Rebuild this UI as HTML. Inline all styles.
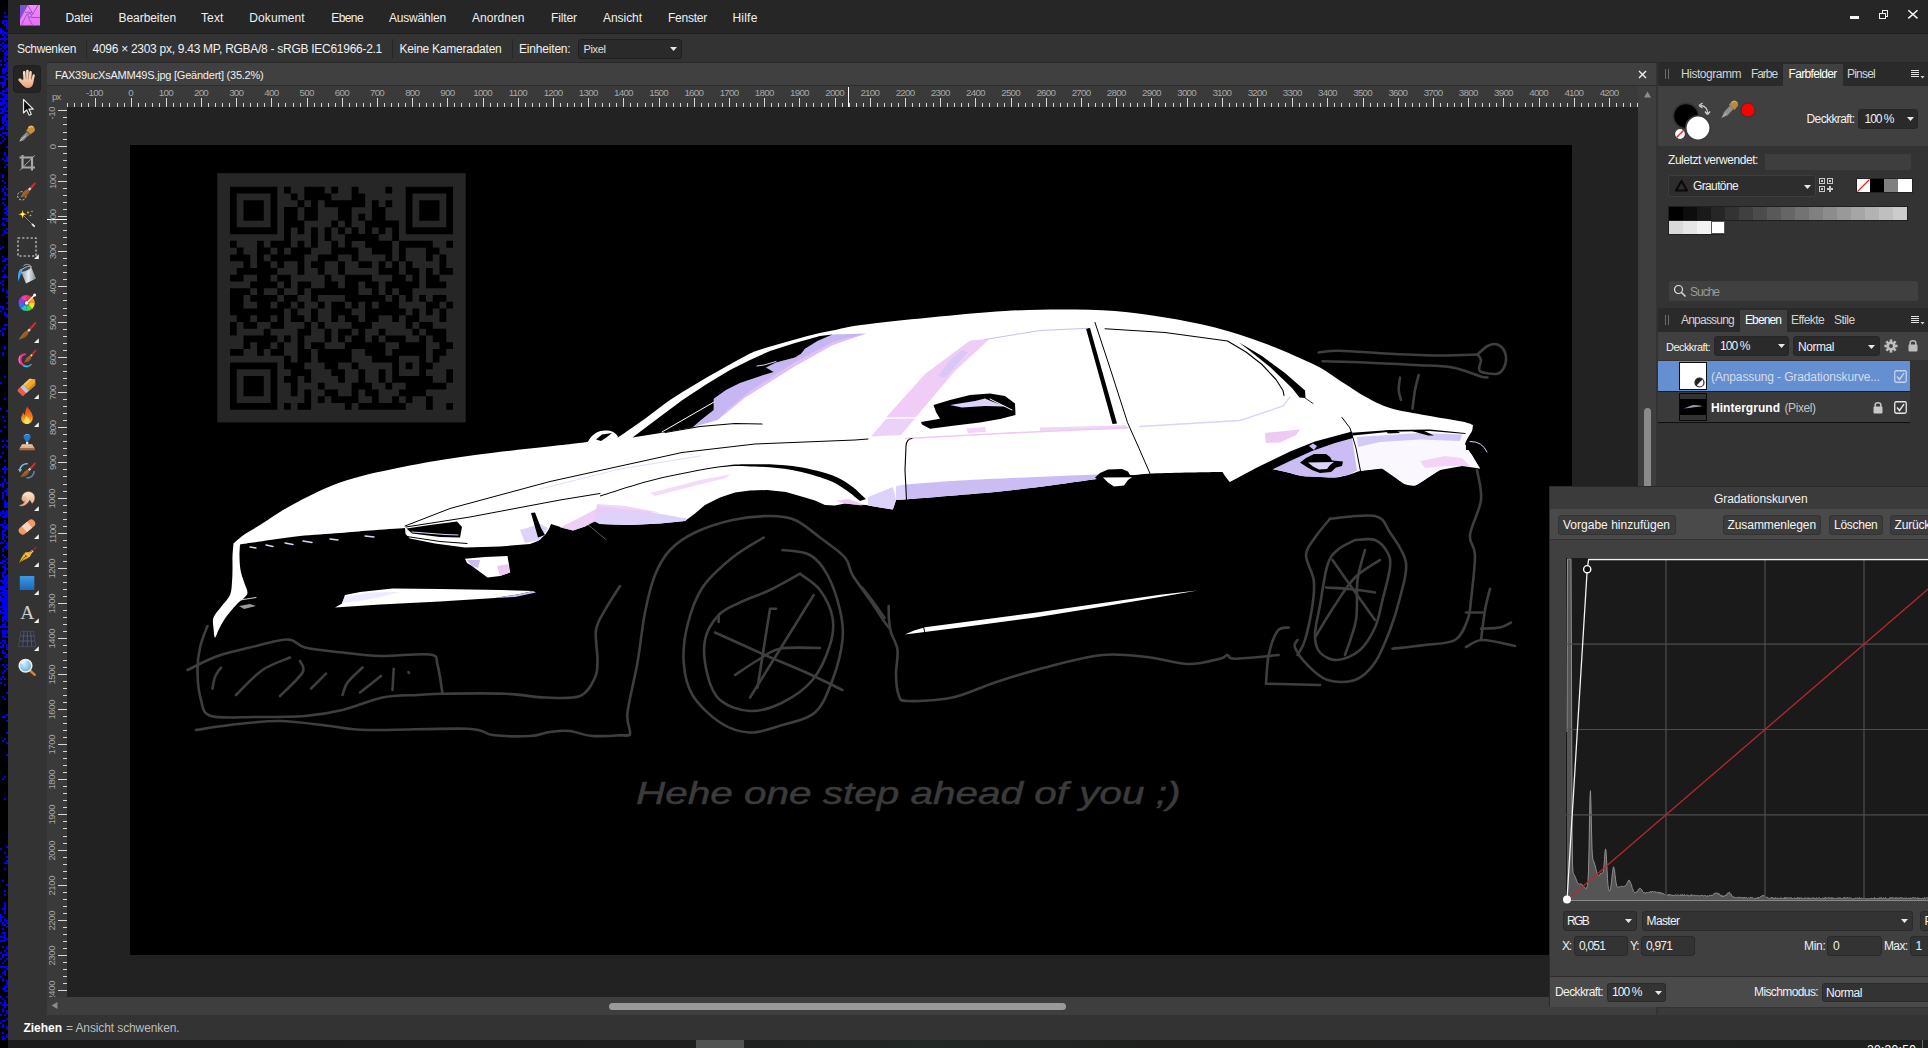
<!DOCTYPE html>
<html lang="de"><head><meta charset="utf-8"><title>Affinity Photo</title>
<style>
html,body{margin:0;padding:0;background:#222;}
body{width:1928px;height:1048px;overflow:hidden;position:relative;font-family:"Liberation Sans",sans-serif;font-size:12px;color:#e4e4e4;}
.t{position:absolute;white-space:nowrap;line-height:1;}
.r{position:absolute;box-sizing:border-box;}
svg{position:absolute;overflow:visible;}
.fld{position:absolute;box-sizing:border-box;background:#2b2b2b;border:1px solid #222;border-radius:3px;}
.btn{position:absolute;box-sizing:border-box;background:#3b3b3b;border:1px solid #2e2e2e;border-radius:3px;}
</style></head>
<body>
<!-- p_strip -->
<svg style="left:0;top:0" width="8" height="1048" viewBox="0 0 8 1048" shape-rendering="crispEdges"><rect width="8" height="1048" fill="#000"/><path fill="#0000ff" d="M4 12h2v2h-2zM4 16h2v2h-2zM6 16h2v2h-2zM2 20h2v2h-2zM4 20h2v2h-2zM6 20h2v2h-2zM2 22h2v2h-2zM6 22h2v2h-2zM4 24h2v2h-2zM6 24h2v2h-2zM6 26h2v2h-2zM0 28h2v2h-2zM6 28h2v2h-2zM0 30h2v2h-2zM2 30h2v2h-2zM0 32h2v2h-2zM2 32h2v2h-2zM4 32h2v2h-2zM6 32h2v2h-2zM2 34h2v2h-2zM6 34h2v2h-2zM4 36h2v2h-2zM0 38h2v2h-2zM2 38h2v2h-2zM4 38h2v2h-2zM6 38h2v2h-2zM4 40h2v2h-2zM2 42h2v2h-2zM0 44h2v2h-2zM4 44h2v2h-2zM6 44h2v2h-2zM2 46h2v2h-2zM4 46h2v2h-2zM6 46h2v2h-2zM0 48h2v2h-2zM4 48h2v2h-2zM2 50h2v2h-2zM6 50h2v2h-2zM4 52h2v2h-2zM6 52h2v2h-2zM4 54h2v2h-2zM6 54h2v2h-2zM4 56h2v2h-2zM4 58h2v2h-2zM6 58h2v2h-2zM0 60h2v2h-2zM4 60h2v2h-2zM6 62h2v2h-2zM0 64h2v2h-2zM4 64h2v2h-2zM6 64h2v2h-2zM6 66h2v2h-2zM2 68h2v2h-2zM4 68h2v2h-2zM6 68h2v2h-2zM2 70h2v2h-2zM4 70h2v2h-2zM6 70h2v2h-2zM2 72h2v2h-2zM4 72h2v2h-2zM6 74h2v2h-2zM0 76h2v2h-2zM2 76h2v2h-2zM4 76h2v2h-2zM4 78h2v2h-2zM6 78h2v2h-2zM4 80h2v2h-2zM0 82h2v2h-2zM2 82h2v2h-2zM4 82h2v2h-2zM2 84h2v2h-2zM4 84h2v2h-2zM2 86h2v2h-2zM6 88h2v2h-2zM2 90h2v2h-2zM4 90h2v2h-2zM6 90h2v2h-2zM0 92h2v2h-2zM2 92h2v2h-2zM2 94h2v2h-2zM4 94h2v2h-2zM6 94h2v2h-2zM4 96h2v2h-2zM6 96h2v2h-2zM0 98h2v2h-2zM2 98h2v2h-2zM4 98h2v2h-2zM6 98h2v2h-2zM2 100h2v2h-2zM4 100h2v2h-2zM0 102h2v2h-2zM2 102h2v2h-2zM4 102h2v2h-2zM6 102h2v2h-2zM0 104h2v2h-2zM2 104h2v2h-2zM6 104h2v2h-2zM4 106h2v2h-2zM6 106h2v2h-2zM0 108h2v2h-2zM2 108h2v2h-2zM4 108h2v2h-2zM2 110h2v2h-2zM4 110h2v2h-2zM6 110h2v2h-2zM0 112h2v2h-2zM2 112h2v2h-2zM4 114h2v2h-2zM6 114h2v2h-2zM2 116h2v2h-2zM4 116h2v2h-2zM6 116h2v2h-2zM2 118h2v2h-2zM4 118h2v2h-2zM2 120h2v2h-2zM4 120h2v2h-2zM6 120h2v2h-2zM2 122h2v2h-2zM6 122h2v2h-2zM4 124h2v2h-2zM6 124h2v2h-2zM2 126h2v2h-2zM6 126h2v2h-2zM0 128h2v2h-2zM2 128h2v2h-2zM6 128h2v2h-2zM2 132h2v2h-2zM4 132h2v2h-2zM6 132h2v2h-2zM0 134h2v2h-2zM6 134h2v2h-2zM2 136h2v2h-2zM4 138h2v2h-2zM2 140h2v2h-2zM0 142h2v2h-2zM6 146h2v2h-2zM4 152h2v2h-2zM4 154h2v2h-2zM6 156h2v2h-2zM2 158h2v2h-2zM6 158h2v2h-2zM4 160h2v2h-2zM6 160h2v2h-2zM6 164h2v2h-2zM4 166h2v2h-2zM2 174h2v2h-2zM2 176h2v2h-2zM2 180h2v2h-2zM4 182h2v2h-2zM4 186h2v2h-2zM2 188h2v2h-2zM6 188h2v2h-2zM2 190h2v2h-2zM4 192h2v2h-2zM4 194h2v2h-2zM6 194h2v2h-2zM2 198h2v2h-2zM4 198h2v2h-2zM2 202h2v2h-2zM4 204h2v2h-2zM6 206h2v2h-2zM4 208h2v2h-2zM6 208h2v2h-2zM6 210h2v2h-2zM4 212h2v2h-2zM6 212h2v2h-2zM6 214h2v2h-2zM2 218h2v2h-2zM4 218h2v2h-2zM6 218h2v2h-2zM6 220h2v2h-2zM2 222h2v2h-2zM2 224h2v2h-2zM4 224h2v2h-2zM6 228h2v2h-2zM4 230h2v2h-2zM4 232h2v2h-2zM6 232h2v2h-2zM2 234h2v2h-2zM2 246h2v2h-2zM0 248h2v2h-2zM2 256h2v2h-2zM4 258h2v2h-2zM6 258h2v2h-2zM2 260h2v2h-2zM4 260h2v2h-2zM6 264h2v2h-2zM4 266h2v2h-2zM4 268h2v2h-2zM2 270h2v2h-2zM4 274h2v2h-2zM2 276h2v2h-2zM4 276h2v2h-2zM6 276h2v2h-2zM2 280h2v2h-2zM0 282h2v2h-2zM2 284h2v2h-2zM2 288h2v2h-2zM2 290h2v2h-2zM6 290h2v2h-2zM6 292h2v2h-2zM6 296h2v2h-2zM6 302h2v2h-2zM0 306h2v2h-2zM2 306h2v2h-2zM2 308h2v2h-2zM6 308h2v2h-2zM0 310h2v2h-2zM4 312h2v2h-2zM4 314h2v2h-2zM6 314h2v2h-2zM6 316h2v2h-2zM4 324h2v2h-2zM6 324h2v2h-2zM2 328h2v2h-2zM4 328h2v2h-2zM0 330h2v2h-2zM2 332h2v2h-2zM2 334h2v2h-2zM4 346h2v2h-2zM4 348h2v2h-2zM2 352h2v2h-2zM2 354h2v2h-2zM4 376h2v2h-2zM0 382h2v2h-2zM4 398h2v2h-2zM0 408h2v2h-2zM6 410h2v2h-2zM2 416h2v2h-2zM4 420h2v2h-2zM4 426h2v2h-2zM0 430h2v2h-2zM2 440h2v2h-2zM6 440h2v2h-2zM4 444h2v2h-2zM2 446h2v2h-2zM6 446h2v2h-2zM2 452h2v2h-2zM0 456h2v2h-2zM4 460h2v2h-2zM4 466h2v2h-2zM2 468h2v2h-2zM4 468h2v2h-2zM6 468h2v2h-2zM4 470h2v2h-2zM4 472h2v2h-2zM2 476h2v2h-2zM4 478h2v2h-2zM4 480h2v2h-2zM2 482h2v2h-2zM6 482h2v2h-2zM0 484h2v2h-2zM2 484h2v2h-2zM2 486h2v2h-2zM6 488h2v2h-2zM4 490h2v2h-2zM6 490h2v2h-2zM2 492h2v2h-2zM6 492h2v2h-2zM2 494h2v2h-2zM6 494h2v2h-2zM2 496h2v2h-2zM2 498h2v2h-2zM4 500h2v2h-2zM4 502h2v2h-2zM6 502h2v2h-2zM4 504h2v2h-2zM6 504h2v2h-2zM4 506h2v2h-2zM6 506h2v2h-2zM2 510h2v2h-2zM6 510h2v2h-2zM0 512h2v2h-2zM2 512h2v2h-2zM4 512h2v2h-2zM6 512h2v2h-2zM0 514h2v2h-2zM4 514h2v2h-2zM6 514h2v2h-2zM2 516h2v2h-2zM4 516h2v2h-2zM6 516h2v2h-2zM4 520h2v2h-2zM4 522h2v2h-2zM0 524h2v2h-2zM2 524h2v2h-2zM6 524h2v2h-2zM2 526h2v2h-2zM4 526h2v2h-2zM6 526h2v2h-2zM4 528h2v2h-2zM6 528h2v2h-2zM2 530h2v2h-2zM4 530h2v2h-2zM2 532h2v2h-2zM2 534h2v2h-2zM4 534h2v2h-2zM2 536h2v2h-2zM6 536h2v2h-2zM2 538h2v2h-2zM4 540h2v2h-2zM0 542h2v2h-2zM2 542h2v2h-2zM6 542h2v2h-2zM6 544h2v2h-2zM4 546h2v2h-2zM6 546h2v2h-2zM2 548h2v2h-2zM6 548h2v2h-2zM2 550h2v2h-2zM2 554h2v2h-2zM4 556h2v2h-2zM6 558h2v2h-2zM2 560h2v2h-2zM4 560h2v2h-2zM0 562h2v2h-2zM2 562h2v2h-2zM6 562h2v2h-2zM4 564h2v2h-2zM2 566h2v2h-2zM4 566h2v2h-2zM4 568h2v2h-2zM6 568h2v2h-2zM4 570h2v2h-2zM2 572h2v2h-2zM4 572h2v2h-2zM2 574h2v2h-2zM6 574h2v2h-2zM2 576h2v2h-2zM4 576h2v2h-2zM6 576h2v2h-2zM4 578h2v2h-2zM6 578h2v2h-2zM0 580h2v2h-2zM2 580h2v2h-2zM4 580h2v2h-2zM6 580h2v2h-2zM2 582h2v2h-2zM4 582h2v2h-2zM6 582h2v2h-2zM4 584h2v2h-2zM6 584h2v2h-2zM0 586h2v2h-2zM2 586h2v2h-2zM4 586h2v2h-2zM6 586h2v2h-2zM0 588h2v2h-2zM2 588h2v2h-2zM4 588h2v2h-2zM2 590h2v2h-2zM4 590h2v2h-2zM6 590h2v2h-2zM0 592h2v2h-2zM2 592h2v2h-2zM4 592h2v2h-2zM6 592h2v2h-2zM2 594h2v2h-2zM4 594h2v2h-2zM6 594h2v2h-2zM0 596h2v2h-2zM4 596h2v2h-2zM6 596h2v2h-2zM0 598h2v2h-2zM2 598h2v2h-2zM4 598h2v2h-2zM6 598h2v2h-2zM0 600h2v2h-2zM2 600h2v2h-2zM4 600h2v2h-2zM6 600h2v2h-2zM2 602h2v2h-2zM4 602h2v2h-2zM6 602h2v2h-2zM2 604h2v2h-2zM4 604h2v2h-2zM6 604h2v2h-2zM0 606h2v2h-2zM2 606h2v2h-2zM4 606h2v2h-2zM6 606h2v2h-2zM2 608h2v2h-2zM4 608h2v2h-2zM6 608h2v2h-2zM0 610h2v2h-2zM4 610h2v2h-2zM6 610h2v2h-2zM0 612h2v2h-2zM2 612h2v2h-2zM4 612h2v2h-2zM6 612h2v2h-2zM4 614h2v2h-2zM6 614h2v2h-2zM2 616h2v2h-2zM4 616h2v2h-2zM6 616h2v2h-2zM2 618h2v2h-2zM4 618h2v2h-2zM6 618h2v2h-2zM2 620h2v2h-2zM6 620h2v2h-2zM4 622h2v2h-2zM2 624h2v2h-2zM4 624h2v2h-2zM0 626h2v2h-2zM2 626h2v2h-2zM4 626h2v2h-2zM6 626h2v2h-2zM2 630h2v2h-2zM4 630h2v2h-2zM6 630h2v2h-2zM2 632h2v2h-2zM4 632h2v2h-2zM6 632h2v2h-2zM2 634h2v2h-2zM4 634h2v2h-2zM2 636h2v2h-2zM4 636h2v2h-2zM6 636h2v2h-2zM2 640h2v2h-2zM4 640h2v2h-2zM0 642h2v2h-2zM4 642h2v2h-2zM2 644h2v2h-2zM6 644h2v2h-2zM0 646h2v2h-2zM2 646h2v2h-2zM6 646h2v2h-2zM6 648h2v2h-2zM2 650h2v2h-2zM2 652h2v2h-2zM4 652h2v2h-2zM6 654h2v2h-2zM4 656h2v2h-2zM6 656h2v2h-2zM0 658h2v2h-2zM2 664h2v2h-2zM6 664h2v2h-2zM4 666h2v2h-2zM6 668h2v2h-2zM4 670h2v2h-2zM2 672h2v2h-2zM2 676h2v2h-2zM0 678h2v2h-2zM4 678h2v2h-2zM0 682h2v2h-2zM4 684h2v2h-2zM6 692h2v2h-2zM2 696h2v2h-2zM4 698h2v2h-2zM6 714h2v2h-2zM2 716h2v2h-2zM4 716h2v2h-2zM6 720h2v2h-2zM6 732h2v2h-2zM4 738h2v2h-2zM2 740h2v2h-2zM6 742h2v2h-2zM6 754h2v2h-2zM4 776h2v2h-2zM2 778h2v2h-2zM4 798h2v2h-2zM6 846h2v2h-2zM0 848h2v2h-2zM4 852h2v2h-2zM6 856h2v2h-2zM6 860h2v2h-2zM4 862h2v2h-2zM6 862h2v2h-2zM4 868h2v2h-2zM2 880h2v2h-2zM6 884h2v2h-2zM4 890h2v2h-2zM4 894h2v2h-2zM4 902h2v2h-2zM4 904h2v2h-2zM4 906h2v2h-2zM2 908h2v2h-2zM4 908h2v2h-2zM4 910h2v2h-2zM4 912h2v2h-2zM0 914h2v2h-2zM0 916h2v2h-2zM2 916h2v2h-2zM0 918h2v2h-2zM4 918h2v2h-2zM0 920h2v2h-2zM4 920h2v2h-2zM6 920h2v2h-2zM2 922h2v2h-2zM6 922h2v2h-2zM2 924h2v2h-2zM4 924h2v2h-2zM6 926h2v2h-2zM2 928h2v2h-2zM2 932h2v2h-2zM4 932h2v2h-2zM4 934h2v2h-2zM0 936h2v2h-2zM2 936h2v2h-2zM4 936h2v2h-2zM4 938h2v2h-2zM6 938h2v2h-2zM0 940h2v2h-2zM2 940h2v2h-2zM4 940h2v2h-2zM2 946h2v2h-2zM6 946h2v2h-2zM6 948h2v2h-2zM4 950h2v2h-2zM0 952h2v2h-2zM6 952h2v2h-2zM2 954h2v2h-2zM4 954h2v2h-2zM6 954h2v2h-2zM2 956h2v2h-2zM0 958h2v2h-2zM6 958h2v2h-2zM4 960h2v2h-2zM2 962h2v2h-2zM0 966h2v2h-2zM2 966h2v2h-2zM4 966h2v2h-2zM6 966h2v2h-2zM6 968h2v2h-2zM4 970h2v2h-2zM2 972h2v2h-2zM4 972h2v2h-2zM4 974h2v2h-2zM0 976h2v2h-2zM2 978h2v2h-2zM2 980h2v2h-2zM6 980h2v2h-2zM6 982h2v2h-2zM6 984h2v2h-2zM4 986h2v2h-2zM6 986h2v2h-2zM2 988h2v2h-2zM4 988h2v2h-2zM4 990h2v2h-2zM6 990h2v2h-2zM0 996h2v2h-2zM6 996h2v2h-2zM2 998h2v2h-2zM4 1000h2v2h-2zM0 1002h2v2h-2zM4 1002h2v2h-2zM2 1004h2v2h-2zM4 1004h2v2h-2zM6 1004h2v2h-2zM4 1006h2v2h-2zM2 1008h2v2h-2zM2 1010h2v2h-2zM6 1010h2v2h-2zM6 1012h2v2h-2zM0 1014h2v2h-2zM4 1014h2v2h-2zM6 1018h2v2h-2zM2 1020h2v2h-2zM4 1020h2v2h-2zM0 1022h2v2h-2zM2 1024h2v2h-2zM2 1026h2v2h-2zM6 1026h2v2h-2zM6 1028h2v2h-2zM2 1032h2v2h-2zM6 1034h2v2h-2zM2 1036h2v2h-2zM6 1036h2v2h-2zM2 1038h2v2h-2zM4 1038h2v2h-2zM2 1042h2v2h-2z"/></svg>
<!-- p_top -->
<div class="r" style="left:8px;top:0px;width:1920px;height:34px;background:#262626;"></div>
<div class="r" style="left:8px;top:33px;width:1920px;height:1px;background:#1e1e1e;"></div>
<svg style="left:20px;top:4.700px" width="20" height="20.500" viewBox="0 0 20 20.500">
<defs><linearGradient id="lg" x1="0" y1="0" x2="0.300" y2="1"><stop offset="0" stop-color="#f894fb"/><stop offset="1" stop-color="#e672f4"/></linearGradient></defs>
<rect width="20" height="20.500" fill="url(#lg)"/>
<path d="M0 0H8.100L0 14.700z" fill="#7e50d8"/>
<g stroke="#9a50ca" stroke-width="0.950" fill="none">
<path d="M8.100 0.600L12.800 9.100"/><path d="M5 7.300H11.900"/><path d="M18.100 0L12.600 9.600"/><path d="M10.600 12.500H20"/><path d="M8.100 12.200L12.800 20.500"/><path d="M1.250 20.500L7.200 8.600"/>
<circle cx="9.700" cy="10.300" r="1.800"/></g></svg>
<span class="t " style="left:65.50px;top:11.84px;font-size:12px;color:#f0f0f0;letter-spacing:-0.202px;">Datei</span>
<span class="t " style="left:118.50px;top:11.84px;font-size:12px;color:#f0f0f0;letter-spacing:-0.054px;">Bearbeiten</span>
<span class="t " style="left:201.00px;top:11.84px;font-size:12px;color:#f0f0f0;letter-spacing:0.123px;">Text</span>
<span class="t " style="left:249.30px;top:11.84px;font-size:12px;color:#f0f0f0;letter-spacing:0.089px;">Dokument</span>
<span class="t " style="left:331.30px;top:11.84px;font-size:12px;color:#f0f0f0;letter-spacing:-0.599px;">Ebene</span>
<span class="t " style="left:389.00px;top:11.84px;font-size:12px;color:#f0f0f0;letter-spacing:-0.189px;">Auswählen</span>
<span class="t " style="left:472.00px;top:11.84px;font-size:12px;color:#f0f0f0;letter-spacing:0.058px;">Anordnen</span>
<span class="t " style="left:551.00px;top:11.84px;font-size:12px;color:#f0f0f0;letter-spacing:-0.111px;">Filter</span>
<span class="t " style="left:603.00px;top:11.84px;font-size:12px;color:#f0f0f0;letter-spacing:-0.050px;">Ansicht</span>
<span class="t " style="left:668.00px;top:11.84px;font-size:12px;color:#f0f0f0;letter-spacing:-0.240px;">Fenster</span>
<span class="t " style="left:732.50px;top:11.84px;font-size:12px;color:#f0f0f0;letter-spacing:0.199px;">Hilfe</span>
<svg style="left:1846px;top:8px" width="76" height="16" viewBox="0 0 76 16" shape-rendering="crispEdges">
<rect x="4" y="7.700" width="9.300" height="3.300" fill="#f4f4f4"/>
<g fill="none" stroke="#f0f0f0" stroke-width="1.300"><path d="M36.300 4.800V2.600H41.700V8.200H39.600"/><rect x="33.500" y="5.400" width="5.700" height="5.200"/></g>
<path d="M33 5.200H39.800M35.800 2.400H42.200" stroke="#f0f0f0" stroke-width="1.400"/>
</svg>
<svg style="left:1907px;top:9px" width="12" height="11" viewBox="0 0 12 11"><path d="M1.300 1.200L10.500 9.400M10.500 1.200L1.300 9.400" stroke="#f4f4f4" stroke-width="1.500" fill="none"/></svg>
<div class="r" style="left:8px;top:34px;width:1920px;height:29px;background:#333333;"></div>
<div class="r" style="left:47px;top:62px;width:1881px;height:1.3px;background:#282828;"></div>
<span class="t " style="left:17.00px;top:42.84px;font-size:12px;color:#f0f0f0;letter-spacing:-0.337px;">Schwenken</span>
<div class="r" style="left:86px;top:39px;width:1px;height:20px;background:#262626;"></div>
<span class="t " style="left:92.50px;top:42.84px;font-size:12px;color:#f0f0f0;letter-spacing:-0.277px;">4096 × 2303 px, 9.43 MP, RGBA/8 - sRGB IEC61966-2.1</span>
<div class="r" style="left:392px;top:39px;width:1px;height:20px;background:#262626;"></div>
<span class="t " style="left:399.50px;top:42.84px;font-size:12px;color:#f0f0f0;letter-spacing:-0.239px;">Keine Kameradaten</span>
<div class="r" style="left:512px;top:39px;width:1px;height:20px;background:#262626;"></div>
<span class="t " style="left:519.00px;top:42.84px;font-size:12px;color:#f0f0f0;letter-spacing:-0.187px;">Einheiten:</span>
<div class="fld" style="left:578px;top:39px;width:104px;height:20px;background:#2a2a2a;border-color:#1f1f1f"></div>
<span class="t " style="left:583.50px;top:43.69px;font-size:11px;color:#e0e0e0;letter-spacing:-0.369px;">Pixel</span>
<svg style="left:670px;top:47px" width="7" height="4" viewBox="0 0 7 4"><path d="M0 0H7L3.5 4z" fill="#e8e8e8"/></svg>
<!-- p_tools -->
<div class="r" style="left:8px;top:63px;width:39px;height:952px;background:#333333;"></div>
<div class="r" style="left:13px;top:65px;width:28px;height:28px;background:#242424;border-radius:4px;border:1px solid #1f1f1f"></div>
<svg style="left:0;top:0" width="60" height="700" viewBox="0 0 60 700"><defs>
<linearGradient id="gskin" x1="0" y1="0" x2="0" y2="1"><stop offset="0" stop-color="#fde6d2"/><stop offset="1" stop-color="#e8a884"/></linearGradient>
<linearGradient id="gflame" x1="0" y1="0" x2="0" y2="1"><stop offset="0" stop-color="#e03c14"/><stop offset="0.55" stop-color="#f47a18"/><stop offset="1" stop-color="#ffd030"/></linearGradient>
<linearGradient id="gblue" x1="0" y1="0" x2="0" y2="1"><stop offset="0" stop-color="#3f98e6"/><stop offset="1" stop-color="#1c68b8"/></linearGradient>
<linearGradient id="gbr" x1="0" y1="0" x2="1" y2="1"><stop offset="0" stop-color="#c98a4a"/><stop offset="1" stop-color="#6e3a12"/></linearGradient>
<linearGradient id="gsilver" x1="0" y1="0" x2="1" y2="0"><stop offset="0" stop-color="#8a969c"/><stop offset="0.5" stop-color="#e4ecf0"/><stop offset="1" stop-color="#7c888e"/></linearGradient>
<radialGradient id="glens" cx="0.4" cy="0.35" r="0.7"><stop offset="0" stop-color="#d4ecfc"/><stop offset="1" stop-color="#5aa8e4"/></radialGradient>
</defs>
<g transform="translate(13 64)"><defs><linearGradient id="ghand" gradientUnits="userSpaceOnUse" x1="0" y1="6" x2="0" y2="24"><stop offset="0" stop-color="#fde2cc"/><stop offset="0.550" stop-color="#f6c8a8"/><stop offset="1" stop-color="#e6a07c"/></linearGradient></defs>
<g stroke="url(#ghand)" stroke-linecap="round" fill="none"><path d="M11.700 16L11.200 8.200" stroke-width="2.500"/><path d="M14.400 16V7.100" stroke-width="2.500"/><path d="M17 16L17.500 8.200" stroke-width="2.500"/><path d="M19.200 17.500L20.700 11.400" stroke-width="2.300"/><path d="M11 20.500L6.800 15.800" stroke-width="2.900"/></g>
<path d="M9.300 15.500H20.300C20.800 19 19.800 24 14.800 24C10.500 24 8.600 19.500 9.300 15.500Z" fill="url(#ghand)"/></g>
<g transform="translate(13 92)"><path d="M10.500 7.500V21L13.700 17.900L16.200 23.200L18.300 22.200L15.900 17.100H20.300Z" fill="#0c0c0c" stroke="#e8e8e8" stroke-width="1.200" stroke-linejoin="round"/></g>
<g transform="translate(13 120)"><path d="M6.300 21.800L7.800 17.800L14.300 11.200L17 13.900L10.400 20.400Z" fill="#8c8c8c"/><path d="M7 21L12.500 15.500" stroke="#c4c4c4" stroke-width="1"/>
<path d="M13.200 10.200L14.800 8.600C15 6.500 17.500 4.800 19.800 6C22.200 7.300 22.600 10.200 21 11.800C20 12.800 19.200 12.800 18.800 13.200L17.600 14.600Z" fill="#c6923a"/><path d="M15.500 8C16.500 6.500 18.800 6 20.200 7.200" stroke="#ecc880" stroke-width="1.100" fill="none"/><path d="M13.200 10.200L17.600 14.600L16.800 15.400L12.400 11Z" fill="#7a5a20"/></g>
<g transform="translate(13 148)"><path d="M9.500 7V19.500H22M6.500 9.500H19V22.500" fill="none" stroke="#a8a8a8" stroke-width="2.200"/><path d="M6.800 22.500L21.800 7.300" stroke="#a8a8a8" stroke-width="1"/></g>
<g transform="translate(13 176)"><circle cx="8.800" cy="19.800" r="4.200" fill="none" stroke="#d0d0d0" stroke-width="1" stroke-dasharray="2 1.600"/>
<path d="M21.800 6.200L23 7.800L18.600 12.800L16.800 11.200Z" fill="#e02828"/><path d="M16.800 11.200L18.600 12.800L16.400 15L14.800 13.300Z" fill="#d8d8d8"/>
<path d="M14.800 13.300L16.400 15C16.500 18.500 13.500 21.500 7 21.500C9 19.800 9 15.500 14.800 13.300Z" fill="url(#gbr)"/></g>
<g transform="translate(13 204)"><path d="M11 12L21 22" stroke="#2a2a2a" stroke-width="2.600" stroke-linecap="round"/><path d="M11 12L21 22" stroke="#8a8a8a" stroke-width="1" stroke-linecap="round"/><path d="M19.500 20.500L21.200 22.200" stroke="#e8e8e8" stroke-width="1.800" stroke-linecap="round"/>
<path d="M9.600 6L10.600 9.200L13.800 10.300L10.600 11.300L9.600 14.500L8.600 11.300L5.400 10.300L8.600 9.200Z" fill="#f8c830"/><circle cx="9.600" cy="10.300" r="1.300" fill="#fff6c0"/>
<circle cx="15" cy="8.500" r="0.900" fill="#f8c830"/><circle cx="17.500" cy="11.500" r="0.800" fill="#f8c830"/><circle cx="19" cy="7.500" r="0.700" fill="#f8c830"/></g>
<g transform="translate(13 232)"><rect x="5" y="6" width="18" height="18" fill="none" stroke="#e4e4e4" stroke-width="1.100" stroke-dasharray="2.200 2"/><path d="M25.800 22.300V26.900H21z" fill="#f2f2f2"/></g>
<g transform="translate(13 260)"><path d="M9.500 8C6 9.500 4.500 14 5.200 21.500C6.800 19 7 15 9.500 13Z" fill="#2890e8"/><path d="M8 9C6 11 5.600 15 5.800 18" stroke="#70c0ff" stroke-width="0.800" fill="none"/>
<path d="M8 11.500L18 6.800L23 18.500L13 23.500Z" fill="url(#gsilver)"/><ellipse cx="13" cy="9.150" rx="5.500" ry="1.900" transform="rotate(-25 13 9.150)" fill="#3a4248" stroke="#c8d0d4" stroke-width="0.800"/><path d="M10 6.500C12 3.500 17 3.800 18.500 7" fill="none" stroke="#aab2b6" stroke-width="0.900"/></g>
<g transform="translate(13 288)"><path d="M13.650 15L13.65 6.90A8.100 8.100 0 0 1 19.55 9.45Z" fill="#ff3030"/><path d="M13.650 15L19.38 9.27A8.100 8.100 0 0 1 21.75 15.24Z" fill="#ff9a20"/><path d="M13.650 15L21.75 15.00A8.100 8.100 0 0 1 19.20 20.90Z" fill="#f4e020"/><path d="M13.650 15L19.38 20.73A8.100 8.100 0 0 1 13.41 23.10Z" fill="#50d040"/><path d="M13.650 15L13.65 23.10A8.100 8.100 0 0 1 7.75 20.55Z" fill="#20c8c0"/><path d="M13.650 15L7.92 20.73A8.100 8.100 0 0 1 5.55 14.76Z" fill="#3070f0"/><path d="M13.650 15L5.55 15.00A8.100 8.100 0 0 1 8.10 9.10Z" fill="#9040e0"/><path d="M13.650 15L7.92 9.27A8.100 8.100 0 0 1 13.89 6.90Z" fill="#f040b0"/><circle cx="13.650" cy="15" r="3" fill="#4a4a4a" opacity="0.550"/><path d="M13.650 15L21.600 7" stroke="#ffffff" stroke-width="1.300"/><circle cx="13.650" cy="15" r="1.700" fill="#fff"/><circle cx="21.600" cy="7" r="1.500" fill="#fff"/></g>
<g transform="translate(13 316)"><path d="M22.300 5.800L23.400 7.200L17.800 14L16 12.500Z" fill="#e02828"/><path d="M16 12.500L17.800 14L15.800 16L14.200 14.500Z" fill="#dcdcdc"/>
<path d="M14.200 14.500L15.800 16C15.500 19.500 12 23 5.300 23.500C8 21.500 8.500 17 14.200 14.500Z" fill="url(#gbr)"/><path d="M25.800 22.300V26.900H21z" fill="#f2f2f2"/></g>
<g transform="translate(13 344)"><path d="M13 9.500C7 8.500 3.800 14 6.500 19C9 23 14.500 23 17.500 20.500C14 22 10 21 8.800 17.500C7.600 14 9.800 11 13 11Z" fill="#e83890"/><path d="M10 21.500C12.500 23.500 16.500 23 18.500 20" stroke="#30b8e8" stroke-width="1.300" fill="none"/><path d="M7 12C5.500 14.500 5.800 17.500 7.200 19.500" stroke="#ff80c0" stroke-width="1" fill="none"/>
<path d="M22.600 5.400L23.600 6.600L19.800 11.200L18.400 10Z" fill="#e02828"/><path d="M18.400 10L19.800 11.200L18.300 12.800L17 11.600Z" fill="#dcdcdc"/><path d="M17 11.600L18.300 12.800C18.500 16 15.500 18.800 10.800 18.500C13 17 12.500 13.500 17 11.600Z" fill="url(#gbr)"/></g>
<g transform="translate(13 372)"><g transform="rotate(-42 14 14.500)"><rect x="4" y="10.500" width="5.500" height="8.500" rx="1.600" fill="#f05848"/><rect x="8.800" y="10.500" width="4.200" height="8.500" fill="#d8dcde"/><path d="M9.800 10.500V19M11.200 10.500V19M12.400 10.500V19" stroke="#8a9094" stroke-width="0.500"/><path d="M13 10.500H21L25 14.750L21 19H13Z" fill="#f0a830"/><path d="M13 10.500H21L23 12.600H13Z" fill="#f8c860"/><path d="M13 16.800H23L21 19H13Z" fill="#d08820"/></g><path d="M25.800 22.300V26.900H21z" fill="#f2f2f2"/></g>
<g transform="translate(13 400)"><path d="M14.500 6.500C15.500 9.500 19.500 12 19.800 17C20 21 17.500 24 14 24C10.500 24 8 21.500 8.200 18C8.300 15.500 9.800 14.500 10 12.500C11 13.500 11.300 14.500 11.500 15.500C12.800 13 11.800 9.500 14.500 6.500Z" fill="url(#gflame)"/><path d="M14 24C12 24 10.800 22.500 11 20.800C11.200 19 12.800 18 13.200 16C14.800 17.500 17 19 16.800 21.500C16.700 23 15.500 24 14 24Z" fill="#ffe050"/><path d="M25.800 22.300V26.900H21z" fill="#f2f2f2"/></g>
<g transform="translate(13 428)"><path d="M10.500 8.500C10.500 5.500 17.700 5.500 17.700 8.500C17.700 11 15.200 12 15 14.500H13.200C13 12 10.500 11 10.500 8.500Z" fill="#2a78c8"/><path d="M11.500 7.500C12.500 6.200 15 6 16.500 7" stroke="#7ab8f0" stroke-width="0.900" fill="none"/><rect x="13" y="14" width="2.300" height="2.500" fill="#e8e8e8"/>
<path d="M9 16.500H19.200L21.800 20.500H6.400Z" fill="#e0b088"/><rect x="6.400" y="20.500" width="15.400" height="1.800" fill="#b06838"/><path d="M9 16.500H19.200L19.800 17.500H8.400Z" fill="#f4d4b8"/></g>
<g transform="translate(13 456)"><path d="M6.800 14C7.300 9.800 11 7.200 14.800 7.800" stroke="#86b4e0" stroke-width="1.600" fill="none"/><path d="M5 13L7 16.600L9.200 13.200Z" fill="#86b4e0"/><path d="M21.200 15C21 19.500 17.500 22.300 13.500 21.800" stroke="#5888b8" stroke-width="1.600" fill="none"/>
<path d="M21.800 6.300L23 7.700L18.200 13.200L16.600 11.800Z" fill="#e02828"/><path d="M16.600 11.800L18.200 13.200L16.400 15L14.900 13.600Z" fill="#dcdcdc"/><path d="M14.900 13.600L16.400 15C16.200 18 13.500 21 7.200 21C9.500 19.500 9.800 15.800 14.900 13.600Z" fill="url(#gbr)"/></g>
<g transform="translate(13 484)"><path d="M10 10.500C12 7 18.500 6.500 20.800 10.500C22.500 13.500 21.500 17.500 19 19.500C18 17.500 17.500 16.500 16.500 16C15.500 18.500 13 21.500 9 22C7.500 22.200 6.500 21.800 6.500 21.300C9 21 11 19.500 11.800 17.500C10.500 17.500 9.500 17 9 16C8.500 15 8.500 14 9 13C9 12 9.300 11.200 10 10.500Z" fill="url(#gskin)" stroke="#c08860" stroke-width="0.400"/><path d="M9.200 13.200C11 13 12.500 13.500 13.500 14.500M9 16C10.500 15.500 12 15.800 13 16.800" stroke="#c08860" stroke-width="0.600" fill="none"/><path d="M25.800 22.300V26.900H21z" fill="#f2f2f2"/></g>
<g transform="translate(13 512)"><g transform="rotate(-40 14 15)"><rect x="4.500" y="11" width="19" height="8" rx="4" fill="#f09a68"/><rect x="10.500" y="11" width="7" height="8" fill="#f8d4c0"/></g><path d="M25.800 22.300V26.900H21z" fill="#f2f2f2"/></g>
<g transform="translate(13 540)"><path d="M22.800 6.200L24 7.800L20.500 11.500L18.800 10Z" fill="#8a2c1c"/><path d="M18.800 10L20.500 11.500L18.800 13.300L17.200 11.800Z" fill="#e8e8e8"/><path d="M17.900 10.900L19.600 12.400" stroke="#6a2414" stroke-width="0.800"/>
<path d="M17.200 11.800L18.800 13.300L17 16.500C14 19 10 20 6.200 22.800C8 18.500 9.500 15 12.500 12.500Z" fill="#e8b030"/><path d="M6.200 22.800L12.500 16.500" stroke="#7a5410" stroke-width="0.800"/><circle cx="12.800" cy="16.200" r="1" fill="#7a5410"/><path d="M12.500 12.500L17 16.500" stroke="#f8dc80" stroke-width="0.700"/><path d="M25.800 22.300V26.900H21z" fill="#f2f2f2"/></g>
<g transform="translate(13 568)"><rect x="6.800" y="8" width="14.500" height="14" fill="url(#gblue)"/><path d="M25.800 22.300V26.900H21z" fill="#f2f2f2"/></g>
<g transform="translate(13 596)"><path d="M25.800 22.300V26.900H21z" fill="#f2f2f2"/></g>
<g transform="translate(13 624)"><path d="M8 7.400H20.600L22.600 22.600H5.500Z" fill="#2c303c"/><path d="M11 7.400L9.700 22.600M14.300 7.400V22.600M17.600 7.400L18.800 22.600M7.300 12H21.200M6.500 17H21.900" stroke="#5a6070" stroke-width="0.800" fill="none"/><path d="M8 7.400H20.600L22.600 22.600H5.500Z" fill="none" stroke="#4a5060" stroke-width="0.800"/><path d="M25.800 22.300V26.900H21z" fill="#f2f2f2"/></g>
<g transform="translate(13 652)"><path d="M17 18.500L21.800 22.800" stroke="#e08028" stroke-width="2.400" stroke-linecap="round"/><circle cx="12.500" cy="13.800" r="6.300" fill="url(#glens)" stroke="#f0f0f0" stroke-width="1.500"/><path d="M8.500 12C9.500 9.800 11.500 9 13.500 9.200" stroke="#ffffff" stroke-width="1.100" fill="none" opacity="0.800"/></g>
</svg>
<span class="t" style="left:20.200px;top:602.500px;font-family:'Liberation Serif',serif;font-size:19.500px;color:#cfcfcf">A</span>
<!-- p_doc -->
<div class="r" style="left:47px;top:63px;width:1609px;height:22px;background:#404040;"></div>
<div class="r" style="left:47px;top:85px;width:1609px;height:1px;background:#2c2c2c;"></div>
<span class="t " style="left:55.00px;top:69.69px;font-size:11px;color:#efefef;letter-spacing:-0.225px;">FAX39ucXsAMM49S.jpg [Geändert] (35.2%)</span>
<svg style="left:1638px;top:70px" width="9" height="9" viewBox="0 0 9 9"><path d="M1 1L8 8M8 1L1 8" stroke="#f0f0f0" stroke-width="1.4" fill="none"/></svg>
<div class="r" style="left:47px;top:86px;width:1591px;height:21px;background:#3a3a3a;"></div>
<div class="r" style="left:47px;top:107px;width:20px;height:890px;background:#3a3a3a;"></div>
<div class="r" style="left:1638px;top:86px;width:18px;height:929px;background:#3e3e3e;"></div>
<div class="r" style="left:47px;top:997px;width:1609px;height:18px;background:#3e3e3e;"></div>
<svg style="left:0;top:0" width="1928" height="1048" viewBox="0 0 1928 1048"><path d="M67.5 102.5V107M74.5 102.5V107M81.5 102.5V107M88.5 102.5V107M95.5 98V107M102.5 102.5V107M109.5 102.5V107M117.5 102.5V107M124.5 102.5V107M131.5 98V107M138.5 102.5V107M145.5 102.5V107M152.5 102.5V107M159.5 102.5V107M166.5 98V107M173.5 102.5V107M180.5 102.5V107M187.5 102.5V107M194.5 102.5V107M201.5 98V107M208.5 102.5V107M215.5 102.5V107M222.5 102.5V107M229.5 102.5V107M236.5 98V107M243.5 102.5V107M250.5 102.5V107M257.5 102.5V107M264.5 102.5V107M271.5 98V107M278.5 102.5V107M285.5 102.5V107M293.5 102.5V107M300.5 102.5V107M307.5 98V107M314.5 102.5V107M321.5 102.5V107M328.5 102.5V107M335.5 102.5V107M342.5 98V107M349.5 102.5V107M356.5 102.5V107M363.5 102.5V107M370.5 102.5V107M377.5 98V107M384.5 102.5V107M391.5 102.5V107M398.5 102.5V107M405.5 102.5V107M412.5 98V107M419.5 102.5V107M426.5 102.5V107M433.5 102.5V107M440.5 102.5V107M447.5 98V107M454.5 102.5V107M461.5 102.5V107M469.5 102.5V107M476.5 102.5V107M483.5 98V107M490.5 102.5V107M497.5 102.5V107M504.5 102.5V107M511.5 102.5V107M518.5 98V107M525.5 102.5V107M532.5 102.5V107M539.5 102.5V107M546.5 102.5V107M553.5 98V107M560.5 102.5V107M567.5 102.5V107M574.5 102.5V107M581.5 102.5V107M588.5 98V107M595.5 102.5V107M602.5 102.5V107M609.5 102.5V107M616.5 102.5V107M623.5 98V107M630.5 102.5V107M637.5 102.5V107M645.5 102.5V107M652.5 102.5V107M659.5 98V107M666.5 102.5V107M673.5 102.5V107M680.5 102.5V107M687.5 102.5V107M694.5 98V107M701.5 102.5V107M708.5 102.5V107M715.5 102.5V107M722.5 102.5V107M729.5 98V107M736.5 102.5V107M743.5 102.5V107M750.5 102.5V107M757.5 102.5V107M764.5 98V107M771.5 102.5V107M778.5 102.5V107M785.5 102.5V107M792.5 102.5V107M799.5 98V107M806.5 102.5V107M813.5 102.5V107M821.5 102.5V107M828.5 102.5V107M835.5 98V107M842.5 102.5V107M849.5 102.5V107M856.5 102.5V107M863.5 102.5V107M870.5 98V107M877.5 102.5V107M884.5 102.5V107M891.5 102.5V107M898.5 102.5V107M905.5 98V107M912.5 102.5V107M919.5 102.5V107M926.5 102.5V107M933.5 102.5V107M940.5 98V107M947.5 102.5V107M954.5 102.5V107M961.5 102.5V107M968.5 102.5V107M975.5 98V107M982.5 102.5V107M989.5 102.5V107M997.5 102.5V107M1004.5 102.5V107M1011.5 98V107M1018.5 102.5V107M1025.5 102.5V107M1032.5 102.5V107M1039.5 102.5V107M1046.5 98V107M1053.5 102.5V107M1060.5 102.5V107M1067.5 102.5V107M1074.5 102.5V107M1081.5 98V107M1088.5 102.5V107M1095.5 102.5V107M1102.5 102.5V107M1109.5 102.5V107M1116.5 98V107M1123.5 102.5V107M1130.5 102.5V107M1137.5 102.5V107M1144.5 102.5V107M1151.5 98V107M1158.5 102.5V107M1165.5 102.5V107M1173.5 102.5V107M1180.5 102.5V107M1187.5 98V107M1194.5 102.5V107M1201.5 102.5V107M1208.5 102.5V107M1215.5 102.5V107M1222.5 98V107M1229.5 102.5V107M1236.5 102.5V107M1243.5 102.5V107M1250.5 102.5V107M1257.5 98V107M1264.5 102.5V107M1271.5 102.5V107M1278.5 102.5V107M1285.5 102.5V107M1292.5 98V107M1299.5 102.5V107M1306.5 102.5V107M1313.5 102.5V107M1320.5 102.5V107M1327.5 98V107M1334.5 102.5V107M1341.5 102.5V107M1349.5 102.5V107M1356.5 102.5V107M1363.5 98V107M1370.5 102.5V107M1377.5 102.5V107M1384.5 102.5V107M1391.5 102.5V107M1398.5 98V107M1405.5 102.5V107M1412.5 102.5V107M1419.5 102.5V107M1426.5 102.5V107M1433.5 98V107M1440.5 102.5V107M1447.5 102.5V107M1454.5 102.5V107M1461.5 102.5V107M1468.5 98V107M1475.5 102.5V107M1482.5 102.5V107M1489.5 102.5V107M1496.5 102.5V107M1503.5 98V107M1510.5 102.5V107M1517.5 102.5V107M1525.5 102.5V107M1532.5 102.5V107M1539.5 98V107M1546.5 102.5V107M1553.5 102.5V107M1560.5 102.5V107M1567.5 102.5V107M1574.5 98V107M1581.5 102.5V107M1588.5 102.5V107M1595.5 102.5V107M1602.5 102.5V107M1609.5 98V107M1616.5 102.5V107M1623.5 102.5V107M1630.5 102.5V107M1637.5 102.5V107M58 110.5H67M62.5 117.5H67M62.5 124.5H67M62.5 132.5H67M62.5 139.5H67M58 146.5H67M62.5 153.5H67M62.5 160.5H67M62.5 167.5H67M62.5 174.5H67M58 181.5H67M62.5 188.5H67M62.5 195.5H67M62.5 202.5H67M62.5 209.5H67M58 216.5H67M62.5 223.5H67M62.5 230.5H67M62.5 237.5H67M62.5 244.5H67M58 251.5H67M62.5 258.5H67M62.5 265.5H67M62.5 272.5H67M62.5 279.5H67M58 286.5H67M62.5 293.5H67M62.5 300.5H67M62.5 308.5H67M62.5 315.5H67M58 322.5H67M62.5 329.5H67M62.5 336.5H67M62.5 343.5H67M62.5 350.5H67M58 357.5H67M62.5 364.5H67M62.5 371.5H67M62.5 378.5H67M62.5 385.5H67M58 392.5H67M62.5 399.5H67M62.5 406.5H67M62.5 413.5H67M62.5 420.5H67M58 427.5H67M62.5 434.5H67M62.5 441.5H67M62.5 448.5H67M62.5 455.5H67M58 462.5H67M62.5 469.5H67M62.5 476.5H67M62.5 484.5H67M62.5 491.5H67M58 498.5H67M62.5 505.5H67M62.5 512.5H67M62.5 519.5H67M62.5 526.5H67M58 533.5H67M62.5 540.5H67M62.5 547.5H67M62.5 554.5H67M62.5 561.5H67M58 568.5H67M62.5 575.5H67M62.5 582.5H67M62.5 589.5H67M62.5 596.5H67M58 603.5H67M62.5 610.5H67M62.5 617.5H67M62.5 624.5H67M62.5 631.5H67M58 638.5H67M62.5 645.5H67M62.5 652.5H67M62.5 660.5H67M62.5 667.5H67M58 674.5H67M62.5 681.5H67M62.5 688.5H67M62.5 695.5H67M62.5 702.5H67M58 709.5H67M62.5 716.5H67M62.5 723.5H67M62.5 730.5H67M62.5 737.5H67M58 744.5H67M62.5 751.5H67M62.5 758.5H67M62.5 765.5H67M62.5 772.5H67M58 779.5H67M62.5 786.5H67M62.5 793.5H67M62.5 800.5H67M62.5 807.5H67M58 814.5H67M62.5 821.5H67M62.5 828.5H67M62.5 836.5H67M62.5 843.5H67M58 850.5H67M62.5 857.5H67M62.5 864.5H67M62.5 871.5H67M62.5 878.5H67M58 885.5H67M62.5 892.5H67M62.5 899.5H67M62.5 906.5H67M62.5 913.5H67M58 920.5H67M62.5 927.5H67M62.5 934.5H67M62.5 941.5H67M62.5 948.5H67M58 955.5H67M62.5 962.5H67M62.5 969.5H67M62.5 976.5H67M62.5 983.5H67M58 990.5H67" stroke="#d8d8d8" stroke-width="1" fill="none" shape-rendering="crispEdges"/><path d="M848.5 86.5V107M47 219.5H67" stroke="#ffffff" stroke-width="1" shape-rendering="crispEdges"/><path d="M1644 97.5L1647.5 91.5L1651 97.5z" fill="#8c8c8c"/><path d="M57.5 1002L51.5 1005.5L57.5 1009z" fill="#8c8c8c"/></svg>
<span class="t " style="left:52.00px;top:92.46px;font-size:9.5px;color:#a8a8a8;letter-spacing:-0.766px;">px</span>
<span class="t " style="left:85.97px;top:87.70px;font-size:9.8px;color:#a8a8a8;letter-spacing:-0.686px;">-100</span>
<span class="t " style="left:128.26px;top:87.70px;font-size:9.8px;color:#a8a8a8;letter-spacing:-0.763px;">0</span>
<span class="t " style="left:158.77px;top:87.70px;font-size:9.8px;color:#a8a8a8;letter-spacing:-0.763px;">100</span>
<span class="t " style="left:193.97px;top:87.70px;font-size:9.8px;color:#a8a8a8;letter-spacing:-0.763px;">200</span>
<span class="t " style="left:229.17px;top:87.70px;font-size:9.8px;color:#a8a8a8;letter-spacing:-0.763px;">300</span>
<span class="t " style="left:264.37px;top:87.70px;font-size:9.8px;color:#a8a8a8;letter-spacing:-0.763px;">400</span>
<span class="t " style="left:299.57px;top:87.70px;font-size:9.8px;color:#a8a8a8;letter-spacing:-0.763px;">500</span>
<span class="t " style="left:334.77px;top:87.70px;font-size:9.8px;color:#a8a8a8;letter-spacing:-0.763px;">600</span>
<span class="t " style="left:369.97px;top:87.70px;font-size:9.8px;color:#a8a8a8;letter-spacing:-0.763px;">700</span>
<span class="t " style="left:405.17px;top:87.70px;font-size:9.8px;color:#a8a8a8;letter-spacing:-0.763px;">800</span>
<span class="t " style="left:440.37px;top:87.70px;font-size:9.8px;color:#a8a8a8;letter-spacing:-0.763px;">900</span>
<span class="t " style="left:473.23px;top:87.70px;font-size:9.8px;color:#a8a8a8;letter-spacing:-0.763px;">1000</span>
<span class="t " style="left:508.74px;top:87.70px;font-size:9.8px;color:#a8a8a8;letter-spacing:-0.738px;">1100</span>
<span class="t " style="left:543.63px;top:87.70px;font-size:9.8px;color:#a8a8a8;letter-spacing:-0.763px;">1200</span>
<span class="t " style="left:578.83px;top:87.70px;font-size:9.8px;color:#a8a8a8;letter-spacing:-0.763px;">1300</span>
<span class="t " style="left:614.03px;top:87.70px;font-size:9.8px;color:#a8a8a8;letter-spacing:-0.763px;">1400</span>
<span class="t " style="left:649.23px;top:87.70px;font-size:9.8px;color:#a8a8a8;letter-spacing:-0.763px;">1500</span>
<span class="t " style="left:684.43px;top:87.70px;font-size:9.8px;color:#a8a8a8;letter-spacing:-0.763px;">1600</span>
<span class="t " style="left:719.63px;top:87.70px;font-size:9.8px;color:#a8a8a8;letter-spacing:-0.763px;">1700</span>
<span class="t " style="left:754.83px;top:87.70px;font-size:9.8px;color:#a8a8a8;letter-spacing:-0.763px;">1800</span>
<span class="t " style="left:790.03px;top:87.70px;font-size:9.8px;color:#a8a8a8;letter-spacing:-0.763px;">1900</span>
<span class="t " style="left:825.23px;top:87.70px;font-size:9.8px;color:#a8a8a8;letter-spacing:-0.763px;">2000</span>
<span class="t " style="left:860.43px;top:87.70px;font-size:9.8px;color:#a8a8a8;letter-spacing:-0.763px;">2100</span>
<span class="t " style="left:895.63px;top:87.70px;font-size:9.8px;color:#a8a8a8;letter-spacing:-0.763px;">2200</span>
<span class="t " style="left:930.83px;top:87.70px;font-size:9.8px;color:#a8a8a8;letter-spacing:-0.763px;">2300</span>
<span class="t " style="left:966.03px;top:87.70px;font-size:9.8px;color:#a8a8a8;letter-spacing:-0.763px;">2400</span>
<span class="t " style="left:1001.23px;top:87.70px;font-size:9.8px;color:#a8a8a8;letter-spacing:-0.763px;">2500</span>
<span class="t " style="left:1036.43px;top:87.70px;font-size:9.8px;color:#a8a8a8;letter-spacing:-0.763px;">2600</span>
<span class="t " style="left:1071.63px;top:87.70px;font-size:9.8px;color:#a8a8a8;letter-spacing:-0.763px;">2700</span>
<span class="t " style="left:1106.83px;top:87.70px;font-size:9.8px;color:#a8a8a8;letter-spacing:-0.763px;">2800</span>
<span class="t " style="left:1142.03px;top:87.70px;font-size:9.8px;color:#a8a8a8;letter-spacing:-0.763px;">2900</span>
<span class="t " style="left:1177.23px;top:87.70px;font-size:9.8px;color:#a8a8a8;letter-spacing:-0.763px;">3000</span>
<span class="t " style="left:1212.43px;top:87.70px;font-size:9.8px;color:#a8a8a8;letter-spacing:-0.763px;">3100</span>
<span class="t " style="left:1247.63px;top:87.70px;font-size:9.8px;color:#a8a8a8;letter-spacing:-0.763px;">3200</span>
<span class="t " style="left:1282.83px;top:87.70px;font-size:9.8px;color:#a8a8a8;letter-spacing:-0.763px;">3300</span>
<span class="t " style="left:1318.03px;top:87.70px;font-size:9.8px;color:#a8a8a8;letter-spacing:-0.763px;">3400</span>
<span class="t " style="left:1353.23px;top:87.70px;font-size:9.8px;color:#a8a8a8;letter-spacing:-0.763px;">3500</span>
<span class="t " style="left:1388.43px;top:87.70px;font-size:9.8px;color:#a8a8a8;letter-spacing:-0.763px;">3600</span>
<span class="t " style="left:1423.63px;top:87.70px;font-size:9.8px;color:#a8a8a8;letter-spacing:-0.763px;">3700</span>
<span class="t " style="left:1458.83px;top:87.70px;font-size:9.8px;color:#a8a8a8;letter-spacing:-0.763px;">3800</span>
<span class="t " style="left:1494.03px;top:87.70px;font-size:9.8px;color:#a8a8a8;letter-spacing:-0.763px;">3900</span>
<span class="t " style="left:1529.23px;top:87.70px;font-size:9.8px;color:#a8a8a8;letter-spacing:-0.763px;">4000</span>
<span class="t " style="left:1564.43px;top:87.70px;font-size:9.8px;color:#a8a8a8;letter-spacing:-0.763px;">4100</span>
<span class="t " style="left:1599.63px;top:87.70px;font-size:9.8px;color:#a8a8a8;letter-spacing:-0.763px;">4200</span>
<div class="r" style="left:47px;top:107px;width:12px;height:890px;overflow:hidden">
<span class="t" style="left:-3.64px;top:-0.55px;width:17.68px;font-size:9.5px;color:#a8a8a8;letter-spacing:-0.333px;transform:rotate(-90deg);transform-origin:50% 50%;">-100</span>
<span class="t" style="left:2.74px;top:34.65px;width:4.91px;font-size:9.5px;color:#a8a8a8;letter-spacing:-0.370px;transform:rotate(-90deg);transform-origin:50% 50%;">0</span>
<span class="t" style="left:-2.17px;top:69.85px;width:14.74px;font-size:9.5px;color:#a8a8a8;letter-spacing:-0.370px;transform:rotate(-90deg);transform-origin:50% 50%;">100</span>
<span class="t" style="left:-2.17px;top:105.05px;width:14.74px;font-size:9.5px;color:#a8a8a8;letter-spacing:-0.370px;transform:rotate(-90deg);transform-origin:50% 50%;">200</span>
<span class="t" style="left:-2.17px;top:140.25px;width:14.74px;font-size:9.5px;color:#a8a8a8;letter-spacing:-0.370px;transform:rotate(-90deg);transform-origin:50% 50%;">300</span>
<span class="t" style="left:-2.17px;top:175.45px;width:14.74px;font-size:9.5px;color:#a8a8a8;letter-spacing:-0.370px;transform:rotate(-90deg);transform-origin:50% 50%;">400</span>
<span class="t" style="left:-2.17px;top:210.65px;width:14.74px;font-size:9.5px;color:#a8a8a8;letter-spacing:-0.370px;transform:rotate(-90deg);transform-origin:50% 50%;">500</span>
<span class="t" style="left:-2.17px;top:245.85px;width:14.74px;font-size:9.5px;color:#a8a8a8;letter-spacing:-0.370px;transform:rotate(-90deg);transform-origin:50% 50%;">600</span>
<span class="t" style="left:-2.17px;top:281.05px;width:14.74px;font-size:9.5px;color:#a8a8a8;letter-spacing:-0.370px;transform:rotate(-90deg);transform-origin:50% 50%;">700</span>
<span class="t" style="left:-2.17px;top:316.25px;width:14.74px;font-size:9.5px;color:#a8a8a8;letter-spacing:-0.370px;transform:rotate(-90deg);transform-origin:50% 50%;">800</span>
<span class="t" style="left:-2.17px;top:351.45px;width:14.74px;font-size:9.5px;color:#a8a8a8;letter-spacing:-0.370px;transform:rotate(-90deg);transform-origin:50% 50%;">900</span>
<span class="t" style="left:-4.63px;top:386.65px;width:19.65px;font-size:9.5px;color:#a8a8a8;letter-spacing:-0.370px;transform:rotate(-90deg);transform-origin:50% 50%;">1000</span>
<span class="t" style="left:-4.30px;top:421.85px;width:19.00px;font-size:9.5px;color:#a8a8a8;letter-spacing:-0.357px;transform:rotate(-90deg);transform-origin:50% 50%;">1100</span>
<span class="t" style="left:-4.63px;top:457.05px;width:19.65px;font-size:9.5px;color:#a8a8a8;letter-spacing:-0.370px;transform:rotate(-90deg);transform-origin:50% 50%;">1200</span>
<span class="t" style="left:-4.63px;top:492.25px;width:19.65px;font-size:9.5px;color:#a8a8a8;letter-spacing:-0.370px;transform:rotate(-90deg);transform-origin:50% 50%;">1300</span>
<span class="t" style="left:-4.63px;top:527.45px;width:19.65px;font-size:9.5px;color:#a8a8a8;letter-spacing:-0.370px;transform:rotate(-90deg);transform-origin:50% 50%;">1400</span>
<span class="t" style="left:-4.63px;top:562.65px;width:19.65px;font-size:9.5px;color:#a8a8a8;letter-spacing:-0.370px;transform:rotate(-90deg);transform-origin:50% 50%;">1500</span>
<span class="t" style="left:-4.63px;top:597.85px;width:19.65px;font-size:9.5px;color:#a8a8a8;letter-spacing:-0.370px;transform:rotate(-90deg);transform-origin:50% 50%;">1600</span>
<span class="t" style="left:-4.63px;top:633.05px;width:19.65px;font-size:9.5px;color:#a8a8a8;letter-spacing:-0.370px;transform:rotate(-90deg);transform-origin:50% 50%;">1700</span>
<span class="t" style="left:-4.63px;top:668.25px;width:19.65px;font-size:9.5px;color:#a8a8a8;letter-spacing:-0.370px;transform:rotate(-90deg);transform-origin:50% 50%;">1800</span>
<span class="t" style="left:-4.63px;top:703.45px;width:19.65px;font-size:9.5px;color:#a8a8a8;letter-spacing:-0.370px;transform:rotate(-90deg);transform-origin:50% 50%;">1900</span>
<span class="t" style="left:-4.63px;top:738.65px;width:19.65px;font-size:9.5px;color:#a8a8a8;letter-spacing:-0.370px;transform:rotate(-90deg);transform-origin:50% 50%;">2000</span>
<span class="t" style="left:-4.63px;top:773.85px;width:19.65px;font-size:9.5px;color:#a8a8a8;letter-spacing:-0.370px;transform:rotate(-90deg);transform-origin:50% 50%;">2100</span>
<span class="t" style="left:-4.63px;top:809.05px;width:19.65px;font-size:9.5px;color:#a8a8a8;letter-spacing:-0.370px;transform:rotate(-90deg);transform-origin:50% 50%;">2200</span>
<span class="t" style="left:-4.63px;top:844.25px;width:19.65px;font-size:9.5px;color:#a8a8a8;letter-spacing:-0.370px;transform:rotate(-90deg);transform-origin:50% 50%;">2300</span>
<span class="t" style="left:-4.63px;top:879.45px;width:19.65px;font-size:9.5px;color:#a8a8a8;letter-spacing:-0.370px;transform:rotate(-90deg);transform-origin:50% 50%;">2400</span>
</div>
<div class="r" style="left:1644px;top:407.5px;width:7px;height:90px;background:#8a8a8a;border-radius:3.5px"></div>
<div class="r" style="left:609px;top:1003px;width:457px;height:7px;background:#9a9a9a;border-radius:3.5px"></div>
<!-- p_canvas -->
<div class="r" style="left:130px;top:145px;width:1442px;height:810px;background:#000000;"></div>
<svg style="left:0;top:0" width="1928" height="1048" viewBox="0 0 1928 1048">
<rect x="217.3" y="173.2" width="248.4" height="249.2" fill="#262626"/><path d="M230.00 186.80h47.31v6.81h-47.31zM284.06 186.80h6.76v6.81h-6.76zM304.34 186.80h20.27v6.81h-20.27zM331.37 186.80h6.76v6.81h-6.76zM351.64 186.80h6.76v6.81h-6.76zM385.43 186.80h6.76v6.81h-6.76zM405.71 186.80h47.31v6.81h-47.31zM230.00 193.56h6.76v6.81h-6.76zM270.55 193.56h6.76v6.81h-6.76zM290.82 193.56h6.76v6.81h-6.76zM304.34 193.56h27.03v6.81h-27.03zM351.64 193.56h13.52v6.81h-13.52zM405.71 193.56h6.76v6.81h-6.76zM446.26 193.56h6.76v6.81h-6.76zM230.00 200.32h6.76v6.81h-6.76zM243.52 200.32h20.27v6.81h-20.27zM270.55 200.32h6.76v6.81h-6.76zM297.58 200.32h6.76v6.81h-6.76zM311.10 200.32h6.76v6.81h-6.76zM324.61 200.32h40.55v6.81h-40.55zM371.92 200.32h6.76v6.81h-6.76zM385.43 200.32h6.76v6.81h-6.76zM405.71 200.32h6.76v6.81h-6.76zM419.22 200.32h20.27v6.81h-20.27zM446.26 200.32h6.76v6.81h-6.76zM230.00 207.07h6.76v6.81h-6.76zM243.52 207.07h20.27v6.81h-20.27zM270.55 207.07h6.76v6.81h-6.76zM284.06 207.07h13.52v6.81h-13.52zM304.34 207.07h13.52v6.81h-13.52zM338.13 207.07h13.52v6.81h-13.52zM371.92 207.07h13.52v6.81h-13.52zM405.71 207.07h6.76v6.81h-6.76zM419.22 207.07h20.27v6.81h-20.27zM446.26 207.07h6.76v6.81h-6.76zM230.00 213.83h6.76v6.81h-6.76zM243.52 213.83h20.27v6.81h-20.27zM270.55 213.83h6.76v6.81h-6.76zM284.06 213.83h13.52v6.81h-13.52zM304.34 213.83h13.52v6.81h-13.52zM338.13 213.83h13.52v6.81h-13.52zM358.40 213.83h6.76v6.81h-6.76zM371.92 213.83h13.52v6.81h-13.52zM405.71 213.83h6.76v6.81h-6.76zM419.22 213.83h20.27v6.81h-20.27zM446.26 213.83h6.76v6.81h-6.76zM230.00 220.59h6.76v6.81h-6.76zM270.55 220.59h6.76v6.81h-6.76zM284.06 220.59h20.27v6.81h-20.27zM331.37 220.59h6.76v6.81h-6.76zM344.89 220.59h6.76v6.81h-6.76zM365.16 220.59h33.79v6.81h-33.79zM405.71 220.59h6.76v6.81h-6.76zM446.26 220.59h6.76v6.81h-6.76zM230.00 227.35h47.31v6.81h-47.31zM284.06 227.35h6.76v6.81h-6.76zM297.58 227.35h6.76v6.81h-6.76zM311.10 227.35h6.76v6.81h-6.76zM324.61 227.35h6.76v6.81h-6.76zM338.13 227.35h6.76v6.81h-6.76zM351.64 227.35h6.76v6.81h-6.76zM365.16 227.35h6.76v6.81h-6.76zM378.68 227.35h6.76v6.81h-6.76zM392.19 227.35h6.76v6.81h-6.76zM405.71 227.35h47.31v6.81h-47.31zM284.06 234.11h6.76v6.81h-6.76zM311.10 234.11h6.76v6.81h-6.76zM324.61 234.11h6.76v6.81h-6.76zM344.89 234.11h33.79v6.81h-33.79zM392.19 234.11h6.76v6.81h-6.76zM230.00 240.86h6.76v6.81h-6.76zM257.03 240.86h6.76v6.81h-6.76zM270.55 240.86h20.27v6.81h-20.27zM297.58 240.86h6.76v6.81h-6.76zM311.10 240.86h6.76v6.81h-6.76zM331.37 240.86h6.76v6.81h-6.76zM344.89 240.86h6.76v6.81h-6.76zM365.16 240.86h27.03v6.81h-27.03zM398.95 240.86h33.79v6.81h-33.79zM446.26 240.86h6.76v6.81h-6.76zM236.76 247.62h6.76v6.81h-6.76zM257.03 247.62h13.52v6.81h-13.52zM277.31 247.62h6.76v6.81h-6.76zM290.82 247.62h20.27v6.81h-20.27zM331.37 247.62h27.03v6.81h-27.03zM371.92 247.62h20.27v6.81h-20.27zM398.95 247.62h6.76v6.81h-6.76zM425.98 247.62h13.52v6.81h-13.52zM230.00 254.38h20.27v6.81h-20.27zM257.03 254.38h6.76v6.81h-6.76zM270.55 254.38h33.79v6.81h-33.79zM317.85 254.38h20.27v6.81h-20.27zM351.64 254.38h6.76v6.81h-6.76zM385.43 254.38h6.76v6.81h-6.76zM398.95 254.38h6.76v6.81h-6.76zM425.98 254.38h6.76v6.81h-6.76zM439.50 254.38h6.76v6.81h-6.76zM243.52 261.14h6.76v6.81h-6.76zM257.03 261.14h13.52v6.81h-13.52zM277.31 261.14h6.76v6.81h-6.76zM297.58 261.14h6.76v6.81h-6.76zM311.10 261.14h13.52v6.81h-13.52zM338.13 261.14h6.76v6.81h-6.76zM358.40 261.14h13.52v6.81h-13.52zM378.68 261.14h6.76v6.81h-6.76zM392.19 261.14h6.76v6.81h-6.76zM405.71 261.14h6.76v6.81h-6.76zM439.50 261.14h6.76v6.81h-6.76zM236.76 267.90h40.55v6.81h-40.55zM297.58 267.90h6.76v6.81h-6.76zM317.85 267.90h6.76v6.81h-6.76zM338.13 267.90h6.76v6.81h-6.76zM378.68 267.90h20.27v6.81h-20.27zM405.71 267.90h13.52v6.81h-13.52zM425.98 267.90h6.76v6.81h-6.76zM439.50 267.90h13.52v6.81h-13.52zM230.00 274.65h13.52v6.81h-13.52zM257.03 274.65h13.52v6.81h-13.52zM277.31 274.65h13.52v6.81h-13.52zM324.61 274.65h6.76v6.81h-6.76zM344.89 274.65h27.03v6.81h-27.03zM392.19 274.65h13.52v6.81h-13.52zM412.47 274.65h6.76v6.81h-6.76zM425.98 274.65h13.52v6.81h-13.52zM250.27 281.41h27.03v6.81h-27.03zM284.06 281.41h6.76v6.81h-6.76zM297.58 281.41h13.52v6.81h-13.52zM324.61 281.41h13.52v6.81h-13.52zM344.89 281.41h13.52v6.81h-13.52zM365.16 281.41h13.52v6.81h-13.52zM385.43 281.41h33.79v6.81h-33.79zM425.98 281.41h20.27v6.81h-20.27zM230.00 288.17h20.27v6.81h-20.27zM257.03 288.17h6.76v6.81h-6.76zM277.31 288.17h6.76v6.81h-6.76zM297.58 288.17h6.76v6.81h-6.76zM311.10 288.17h47.31v6.81h-47.31zM371.92 288.17h6.76v6.81h-6.76zM385.43 288.17h6.76v6.81h-6.76zM398.95 288.17h13.52v6.81h-13.52zM230.00 294.93h13.52v6.81h-13.52zM250.27 294.93h27.03v6.81h-27.03zM284.06 294.93h13.52v6.81h-13.52zM311.10 294.93h6.76v6.81h-6.76zM344.89 294.93h40.55v6.81h-40.55zM392.19 294.93h6.76v6.81h-6.76zM405.71 294.93h6.76v6.81h-6.76zM419.22 294.93h6.76v6.81h-6.76zM432.74 294.93h13.52v6.81h-13.52zM230.00 301.69h13.52v6.81h-13.52zM257.03 301.69h13.52v6.81h-13.52zM277.31 301.69h13.52v6.81h-13.52zM297.58 301.69h6.76v6.81h-6.76zM317.85 301.69h6.76v6.81h-6.76zM331.37 301.69h13.52v6.81h-13.52zM351.64 301.69h6.76v6.81h-6.76zM365.16 301.69h6.76v6.81h-6.76zM378.68 301.69h20.27v6.81h-20.27zM425.98 301.69h13.52v6.81h-13.52zM446.26 301.69h6.76v6.81h-6.76zM230.00 308.44h54.06v6.81h-54.06zM290.82 308.44h6.76v6.81h-6.76zM311.10 308.44h6.76v6.81h-6.76zM331.37 308.44h20.27v6.81h-20.27zM365.16 308.44h40.55v6.81h-40.55zM412.47 308.44h6.76v6.81h-6.76zM425.98 308.44h6.76v6.81h-6.76zM439.50 308.44h6.76v6.81h-6.76zM236.76 315.20h13.52v6.81h-13.52zM257.03 315.20h13.52v6.81h-13.52zM277.31 315.20h6.76v6.81h-6.76zM290.82 315.20h13.52v6.81h-13.52zM311.10 315.20h6.76v6.81h-6.76zM331.37 315.20h6.76v6.81h-6.76zM344.89 315.20h13.52v6.81h-13.52zM365.16 315.20h13.52v6.81h-13.52zM392.19 315.20h6.76v6.81h-6.76zM405.71 315.20h13.52v6.81h-13.52zM439.50 315.20h6.76v6.81h-6.76zM230.00 321.96h6.76v6.81h-6.76zM243.52 321.96h13.52v6.81h-13.52zM270.55 321.96h13.52v6.81h-13.52zM304.34 321.96h6.76v6.81h-6.76zM317.85 321.96h6.76v6.81h-6.76zM351.64 321.96h20.27v6.81h-20.27zM405.71 321.96h6.76v6.81h-6.76zM419.22 321.96h13.52v6.81h-13.52zM230.00 328.72h6.76v6.81h-6.76zM263.79 328.72h6.76v6.81h-6.76zM297.58 328.72h13.52v6.81h-13.52zM324.61 328.72h6.76v6.81h-6.76zM338.13 328.72h13.52v6.81h-13.52zM358.40 328.72h6.76v6.81h-6.76zM378.68 328.72h6.76v6.81h-6.76zM412.47 328.72h6.76v6.81h-6.76zM425.98 328.72h20.27v6.81h-20.27zM243.52 335.48h33.79v6.81h-33.79zM284.06 335.48h6.76v6.81h-6.76zM297.58 335.48h6.76v6.81h-6.76zM324.61 335.48h6.76v6.81h-6.76zM338.13 335.48h6.76v6.81h-6.76zM351.64 335.48h13.52v6.81h-13.52zM371.92 335.48h6.76v6.81h-6.76zM385.43 335.48h20.27v6.81h-20.27zM419.22 335.48h6.76v6.81h-6.76zM432.74 335.48h13.52v6.81h-13.52zM243.52 342.23h6.76v6.81h-6.76zM257.03 342.23h13.52v6.81h-13.52zM277.31 342.23h6.76v6.81h-6.76zM297.58 342.23h6.76v6.81h-6.76zM311.10 342.23h13.52v6.81h-13.52zM344.89 342.23h40.55v6.81h-40.55zM398.95 342.23h27.03v6.81h-27.03zM439.50 342.23h13.52v6.81h-13.52zM230.00 348.99h13.52v6.81h-13.52zM257.03 348.99h6.76v6.81h-6.76zM270.55 348.99h13.52v6.81h-13.52zM297.58 348.99h13.52v6.81h-13.52zM317.85 348.99h33.79v6.81h-33.79zM365.16 348.99h20.27v6.81h-20.27zM392.19 348.99h33.79v6.81h-33.79zM432.74 348.99h13.52v6.81h-13.52zM284.06 355.75h6.76v6.81h-6.76zM297.58 355.75h13.52v6.81h-13.52zM317.85 355.75h33.79v6.81h-33.79zM371.92 355.75h27.03v6.81h-27.03zM419.22 355.75h6.76v6.81h-6.76zM432.74 355.75h6.76v6.81h-6.76zM230.00 362.51h47.31v6.81h-47.31zM284.06 362.51h20.27v6.81h-20.27zM324.61 362.51h13.52v6.81h-13.52zM351.64 362.51h6.76v6.81h-6.76zM392.19 362.51h6.76v6.81h-6.76zM405.71 362.51h6.76v6.81h-6.76zM419.22 362.51h13.52v6.81h-13.52zM230.00 369.27h6.76v6.81h-6.76zM270.55 369.27h6.76v6.81h-6.76zM290.82 369.27h20.27v6.81h-20.27zM331.37 369.27h13.52v6.81h-13.52zM358.40 369.27h6.76v6.81h-6.76zM378.68 369.27h6.76v6.81h-6.76zM392.19 369.27h6.76v6.81h-6.76zM419.22 369.27h6.76v6.81h-6.76zM446.26 369.27h6.76v6.81h-6.76zM230.00 376.02h6.76v6.81h-6.76zM243.52 376.02h20.27v6.81h-20.27zM270.55 376.02h6.76v6.81h-6.76zM284.06 376.02h13.52v6.81h-13.52zM304.34 376.02h6.76v6.81h-6.76zM338.13 376.02h6.76v6.81h-6.76zM358.40 376.02h6.76v6.81h-6.76zM378.68 376.02h6.76v6.81h-6.76zM392.19 376.02h40.55v6.81h-40.55zM446.26 376.02h6.76v6.81h-6.76zM230.00 382.78h6.76v6.81h-6.76zM243.52 382.78h20.27v6.81h-20.27zM270.55 382.78h6.76v6.81h-6.76zM290.82 382.78h6.76v6.81h-6.76zM317.85 382.78h6.76v6.81h-6.76zM351.64 382.78h20.27v6.81h-20.27zM385.43 382.78h6.76v6.81h-6.76zM405.71 382.78h40.55v6.81h-40.55zM230.00 389.54h6.76v6.81h-6.76zM243.52 389.54h20.27v6.81h-20.27zM270.55 389.54h6.76v6.81h-6.76zM290.82 389.54h6.76v6.81h-6.76zM304.34 389.54h6.76v6.81h-6.76zM324.61 389.54h13.52v6.81h-13.52zM351.64 389.54h6.76v6.81h-6.76zM365.16 389.54h13.52v6.81h-13.52zM398.95 389.54h27.03v6.81h-27.03zM230.00 396.30h6.76v6.81h-6.76zM270.55 396.30h6.76v6.81h-6.76zM304.34 396.30h6.76v6.81h-6.76zM317.85 396.30h6.76v6.81h-6.76zM331.37 396.30h27.03v6.81h-27.03zM371.92 396.30h6.76v6.81h-6.76zM392.19 396.30h6.76v6.81h-6.76zM405.71 396.30h6.76v6.81h-6.76zM425.98 396.30h6.76v6.81h-6.76zM230.00 403.06h47.31v6.81h-47.31zM284.06 403.06h6.76v6.81h-6.76zM297.58 403.06h13.52v6.81h-13.52zM344.89 403.06h6.76v6.81h-6.76zM358.40 403.06h47.31v6.81h-47.31zM425.98 403.06h6.76v6.81h-6.76zM446.26 403.06h6.76v6.81h-6.76z" fill="#000"/>
<g id="car">
<path d="M233.5 543.5C235.4 541.9 240.6 537.1 245.0 534.0C249.4 530.9 252.2 529.8 260.0 525.0C267.8 520.2 278.7 512.1 292.0 505.0C305.3 497.9 322.0 488.8 340.0 482.5C358.0 476.2 377.5 472.1 400.0 467.5C422.5 462.9 445.8 459.0 475.0 455.0C504.2 451.0 556.2 445.8 575.0 443.5C593.8 441.2 585.8 441.8 588.0 441.5L588.0 441.5C588.7 440.6 590.2 437.7 592.0 436.0C593.8 434.3 596.3 432.4 599.0 431.5C601.7 430.6 605.5 430.3 608.0 430.5C610.5 430.7 612.3 431.5 614.0 432.5C615.7 433.5 617.3 435.8 618.0 436.5L618.0 436.5C618.3 436.4 615.5 439.0 620.0 436.0C624.5 433.0 636.7 424.7 645.0 418.7C653.3 412.7 661.7 405.7 670.0 400.0C678.3 394.3 686.7 389.4 695.0 384.4C703.3 379.4 711.7 374.7 720.0 370.0C728.3 365.3 738.8 359.4 745.0 356.2C751.2 353.0 751.2 352.8 757.5 350.6C763.8 348.4 774.2 345.4 782.5 343.0C790.8 340.6 799.2 338.1 807.5 336.0C815.8 333.9 823.6 332.4 832.5 330.6C841.4 328.8 844.8 327.2 861.0 325.0C877.2 322.8 906.0 319.8 930.0 317.5C954.0 315.2 983.0 312.3 1005.0 311.0C1027.0 309.7 1043.7 309.5 1062.0 309.5C1080.3 309.5 1097.8 309.7 1115.0 311.0C1132.2 312.3 1148.3 314.8 1165.0 317.5C1181.7 320.2 1198.3 323.2 1215.0 327.5C1231.7 331.8 1248.3 337.2 1265.0 343.5C1281.7 349.8 1302.2 358.6 1315.0 365.0C1327.8 371.4 1333.7 376.8 1342.0 382.0C1350.3 387.2 1357.0 392.2 1365.0 396.5C1373.0 400.8 1379.7 404.8 1390.0 408.0C1400.3 411.2 1415.0 413.2 1427.0 415.5C1439.0 417.8 1454.3 419.9 1462.0 421.5C1469.7 423.1 1471.2 424.4 1473.0 425.0L1473.0 425.0C1472.8 426.0 1472.7 429.2 1472.0 431.0C1471.3 432.8 1470.2 433.8 1469.0 436.0C1467.8 438.2 1465.3 441.8 1465.0 444.0C1464.7 446.2 1465.8 447.2 1467.0 449.0C1468.2 450.8 1470.5 452.8 1472.0 455.0C1473.5 457.2 1474.7 459.8 1476.0 462.0C1477.3 464.2 1479.3 467.4 1480.0 468.5L1480.0 468.5C1478.3 468.1 1473.0 466.4 1470.0 466.0C1467.0 465.6 1465.3 465.8 1462.0 466.0C1458.7 466.2 1453.7 466.3 1450.0 467.0C1446.3 467.7 1443.3 468.5 1440.0 470.0C1436.7 471.5 1432.8 474.2 1430.0 476.0C1427.2 477.8 1425.5 479.4 1423.0 481.0C1420.5 482.6 1417.8 484.9 1415.0 485.5C1412.2 486.1 1408.5 485.2 1406.0 484.5C1403.5 483.8 1402.3 482.8 1400.0 481.0C1397.7 479.2 1395.0 476.1 1392.0 474.0C1389.0 471.9 1385.7 469.2 1382.0 468.5C1378.3 467.8 1373.7 469.1 1370.0 469.5C1366.3 469.9 1363.7 470.1 1360.0 471.0C1356.3 471.9 1352.2 473.9 1348.0 475.0C1343.8 476.1 1340.0 477.2 1335.0 477.5C1330.0 477.8 1323.5 477.2 1318.0 477.0C1312.5 476.8 1307.3 476.8 1302.0 476.0C1296.7 475.2 1291.3 473.2 1286.0 472.0C1280.7 470.8 1272.7 469.1 1270.0 468.5L1270.0 468.5L1257.0 469.0L1244.0 476.0L1230.0 482.5L1225.0 476.0L1222.5 472.0L1222.5 472.0C1217.1 472.1 1201.8 472.2 1190.0 472.5C1178.2 472.8 1162.8 472.9 1152.0 473.5C1141.2 474.1 1134.2 475.1 1125.0 476.0C1115.8 476.9 1107.0 477.8 1097.0 479.0C1087.0 480.2 1075.3 482.1 1065.0 483.5C1054.7 484.9 1045.8 486.2 1035.0 487.5C1024.2 488.8 1012.5 490.2 1000.0 491.5C987.5 492.8 971.7 494.0 960.0 495.0C948.3 496.0 938.3 496.8 930.0 497.5C921.7 498.2 915.7 498.6 910.0 499.0C904.3 499.4 898.3 499.8 896.0 500.0L896.0 500.0L894.5 505.0L892.8 509.5L880.0 507.5L866.0 505.0L856.0 504.5L845.0 503.5L835.0 505.5L825.0 505.0L815.0 500.5L805.0 497.5L786.0 492.0L767.0 490.0L750.0 490.5L735.0 492.5L720.0 497.5L705.0 505.0L695.0 513.5L685.0 521.0L660.0 523.5L630.0 525.0L612.0 524.5L600.0 524.0L594.0 521.0L594.0 521.0L585.0 526.5L573.0 530.5L562.0 527.5L551.0 524.0L549.0 529.0L545.0 535.0L538.0 541.0L530.0 544.0L500.0 546.5L465.0 547.5L435.0 543.5L410.0 538.5L405.5 534.0L405.0 528.0L405.0 528.0C399.2 528.4 380.8 529.7 370.0 530.5C359.2 531.3 351.7 532.1 340.0 533.0C328.3 533.9 311.7 534.8 300.0 536.0C288.3 537.2 280.0 538.6 270.0 540.0C260.0 541.4 245.0 543.8 240.0 544.5L240.0 544.5C239.9 546.6 239.4 552.8 239.5 557.0C239.6 561.2 239.8 565.8 240.5 570.0C241.2 574.2 242.8 578.2 244.0 582.0C245.2 585.8 247.5 589.8 247.5 592.5C247.5 595.2 245.6 596.2 244.0 598.0C242.4 599.8 240.3 600.7 238.0 603.0C235.7 605.3 232.3 609.2 230.0 612.0C227.7 614.8 225.8 617.2 224.0 620.0C222.2 622.8 220.5 626.1 219.0 629.0C217.5 631.9 215.9 637.7 215.0 637.5C214.1 637.3 213.8 631.3 213.5 628.0C213.2 624.7 212.2 621.0 213.5 617.5C214.8 614.0 218.2 610.8 221.0 607.0C223.8 603.2 228.2 599.2 230.0 595.0C231.8 590.8 231.6 586.2 232.0 582.0C232.4 577.8 232.4 574.3 232.5 570.0C232.6 565.7 232.3 560.4 232.5 556.0C232.7 551.6 233.3 545.6 233.5 543.5Z" fill="#ffffff" />
<path d="M713.7 398.7L726.0 390.0L740.0 383.0L763.7 375.0L773.7 372.0L766.0 367.5L776.0 362.5L795.0 357.5L801.0 353.7L805.0 348.7L817.5 341.0L832.5 334.5L866.0 333.5L832.5 345.0L795.0 366.0L745.0 397.5L717.5 420.0L695.0 426.5L692.5 427.5L701.0 420.0L713.7 410.0Z" fill="#c6b6f4" />
<path d="M866.0 333.5L832.5 345.0L795.0 366.0L745.0 397.5L717.5 420.0L726.0 411.0L750.0 391.0L795.0 362.0L832.5 342.0Z" fill="#e2c0f4" />
<path d="M970.0 340.5L982.5 339.5L990.0 338.5L955.0 371.0L916.0 417.0L886.0 417.5L925.0 374.0Z" fill="#f0cdf6" />
<path d="M950.0 360.0L962.0 350.0L968.0 352.0L945.0 378.0L938.0 376.0Z" fill="#d9c8f7" />
<path d="M886.0 419.0L915.0 418.5L901.0 435.0L871.0 436.5Z" fill="#ecd2f8" />
<path d="M597.0 506.0L640.0 510.5L687.0 518.5L685.0 521.0L660.0 523.5L630.0 525.0L600.0 524.0L594.0 521.0Z" fill="#ddd2fa" />
<path d="M597.0 504.0L625.0 506.0L660.0 512.5L640.0 513.0L610.0 512.0L596.0 513.0Z" fill="#eccaf4" opacity="0.8"/>
<path d="M650.0 493.0L700.0 480.0L730.0 474.5L726.0 478.0L690.0 487.0L655.0 496.0Z" fill="#f3dcf8" />
<path d="M836.0 501.0L848.0 499.0L860.0 503.0L862.0 505.5L845.0 503.5Z" fill="#eccaf4" />
<path d="M868.0 497.0L893.0 487.0L896.0 500.0L892.8 509.5L880.0 507.5L868.0 505.5Z" fill="#ddd2fa" />
<path d="M906.0 484.5C915.0 483.8 938.5 481.8 960.0 480.5C981.5 479.2 1012.2 478.0 1035.0 477.0C1057.8 476.0 1082.8 475.0 1097.0 474.5C1111.2 474.0 1116.2 474.1 1120.0 474.0L1125.0 476.0C1120.3 476.5 1107.0 477.8 1097.0 479.0C1087.0 480.2 1075.3 482.1 1065.0 483.5C1054.7 484.9 1045.8 486.2 1035.0 487.5C1024.2 488.8 1012.5 490.2 1000.0 491.5C987.5 492.8 971.7 494.0 960.0 495.0C948.3 496.0 938.3 496.8 930.0 497.5C921.7 498.2 915.7 498.6 910.0 499.0C904.3 499.4 898.3 499.8 896.0 500.0Z" fill="#cbbdf4" />
<path d="M896.0 486.0L906.0 484.5L908.0 499.0L896.0 500.0Z" fill="#ddd2fa" />
<path d="M906 438.5L1000 433.5L1087 429.5L1128 427.5" fill="none" stroke="#eccaf4" stroke-width="1.6" stroke-linecap="round" stroke-linejoin="round" />
<path d="M1040.0 427.5L1100.0 426.0L1126.0 425.0L1128.0 429.0L1040.0 431.0Z" fill="#eccaf4" opacity="0.8"/>
<path d="M1140 426.5L1240 420.5L1283 406L1290 397" fill="none" stroke="#ddd2fa" stroke-width="1.4" stroke-linecap="round" stroke-linejoin="round" />
<path d="M1265.0 433.0L1300.0 429.5L1296.0 435.0L1280.0 442.5L1266.0 443.0Z" fill="#eccaf4" />
<path d="M966.0 428.5L985.0 427.0L986.0 432.0L968.0 433.0Z" fill="#eccaf4" opacity="0.8"/>
<path d="M1270.0 468.5L1290.0 459.0L1312.0 449.0L1335.0 441.5L1352.0 437.0L1357.0 470.5L1348.0 475.0L1335.0 477.5L1318.0 477.0L1302.0 476.0L1286.0 472.0Z" fill="#cbbdf4" />
<path d="M1357.0 437.0L1420.0 432.5L1466.0 434.0L1465.0 444.0L1470.0 452.5L1480.0 468.5L1462.0 466.0L1440.0 470.0L1423.0 481.0L1415.0 485.5L1400.0 481.0L1382.0 468.5L1360.0 471.0L1357.0 470.5Z" fill="#faf7ff" />
<path d="M1357.0 437.0L1420.0 433.0L1462.0 434.5L1460.0 441.0L1420.0 439.5L1380.0 442.0L1358.0 447.0Z" fill="#d3c8f7" />
<path d="M1420.0 461.0L1445.0 456.0L1462.0 458.0L1470.0 466.0L1445.0 466.0L1425.0 468.0Z" fill="#f3d4f8" />
<path d="M520.0 530.0L540.0 524.0L548.0 528.0L540.0 540.0L525.0 543.0Z" fill="#ddd2fa" />
<path d="M560.0 527.5L575.0 520.0L600.0 507.0L596.0 521.0L585.0 526.5L573.0 530.5Z" fill="#eccaf4" opacity="0.9"/>
<path d="M632.5 437.5L657.0 419.0L682.5 400.0L706.0 384.5L730.0 370.0L750.0 360.0L770.0 351.0L795.0 343.0L820.0 336.0L832.5 334.5L817.5 341.0L805.0 348.7L801.0 353.7L795.0 357.5L776.0 362.5L766.0 367.5L773.7 372.0L763.7 375.0L740.0 383.0L726.0 390.0L713.7 398.7L713.7 410.0L701.0 420.0L692.5 427.5L663.7 432.5Z" fill="#000000" />
<path d="M662 432L714 402" fill="none" stroke="#ffffff" stroke-width="1.0" stroke-linecap="round" stroke-linejoin="round" />
<path d="M757 366L764 365L776 361.500" fill="none" stroke="#ddd2fa" stroke-width="1.0" stroke-linecap="round" stroke-linejoin="round" />
<path d="M665 432.500L700 426.500L735 423.500L762 424" fill="none" stroke="#000000" stroke-width="1.1" stroke-linecap="round" stroke-linejoin="round" />
<path d="M405 526L450 508.500L550 481.500L682 452.500L755 444L855 440L868 439" fill="none" stroke="#000000" stroke-width="1.0" stroke-linecap="round" stroke-linejoin="round" />
<path d="M540 489L620 469L700 456" fill="none" stroke="#ddd2fa" stroke-width="0.8" stroke-linecap="round" stroke-linejoin="round" />
<path d="M596.0 439.5L602.0 434.5L612.0 433.0L607.0 437.0L601.0 441.0Z" fill="#000000" />
<path d="M600.0 495.5C609.2 492.8 635.0 483.9 655.0 479.0C675.0 474.1 703.3 468.8 720.0 466.3C736.7 463.8 742.9 464.2 755.0 464.2C767.1 464.1 780.0 464.3 792.5 466.0C805.0 467.7 820.4 471.3 830.0 474.5C839.6 477.7 844.0 480.9 850.0 485.0C856.0 489.1 863.3 496.7 866.0 499.0L860.0 501.0C857.7 499.2 851.3 493.5 846.0 490.0C840.7 486.5 837.0 483.3 828.0 480.0C819.0 476.7 804.2 472.2 792.0 470.0C779.8 467.8 767.0 466.9 755.0 466.5C743.0 466.1 736.7 465.1 720.0 467.3C703.3 469.6 675.0 475.1 655.0 480.0C635.0 484.9 609.2 493.8 600.0 496.5Z" fill="#000000" />
<path d="M933.5 405.0L950.0 400.0L970.0 395.0L990.0 393.5L1005.0 396.0L1015.0 403.5L1015.5 415.0L1000.0 419.0L980.0 422.5L955.0 425.5L930.0 428.7L922.0 424.5L921.0 422.0L940.0 418.7L936.0 412.0Z" fill="#000000" />
<path d="M950.0 405.0L975.0 401.0L985.0 398.5L992.0 401.5L1006.0 406.5L985.0 406.0L962.0 407.5Z" fill="#ddd2fa" />
<path d="M990 399L1012 410" fill="none" stroke="#ffffff" stroke-width="1.0" stroke-linecap="round" stroke-linejoin="round" />
<path d="M906.5 499.500L905 470L906 446Q906.500 439 912 438.500" fill="none" stroke="#000000" stroke-width="1.1" stroke-linecap="round" stroke-linejoin="round" />
<path d="M1086.0 328.5L1090.0 328.0L1117.0 423.5L1112.5 424.0Z" fill="#000000" />
<path d="M1095 322.500L1110 368L1127.500 422.500L1138 446L1150 473.500" fill="none" stroke="#000000" stroke-width="1.0" stroke-linecap="round" stroke-linejoin="round" />
<path d="M985 339.500L1040 330.500L1087 328.300" fill="none" stroke="#cbbdf4" stroke-width="1.0" stroke-linecap="round" stroke-linejoin="round" />
<path d="M1105 328.700L1165 332.500L1227.500 341L1246 352L1262 364.500L1276 379.500L1283 390.500L1284 395.500" fill="none" stroke="#000000" stroke-width="1.1" stroke-linecap="round" stroke-linejoin="round" />
<path d="M1239.0 342.5L1262.0 356.0L1285.0 373.0L1305.0 390.5L1305.5 398.0L1299.5 397.5L1292.0 388.0L1270.0 367.0L1250.0 351.0Z" fill="#000000" />
<path d="M1305 398L1313 403.500" fill="none" stroke="#000000" stroke-width="0.8" stroke-linecap="round" stroke-linejoin="round" />
<path d="M1342 417.500L1350 428L1356 448L1360.500 471" fill="none" stroke="#000000" stroke-width="1.0" stroke-linecap="round" stroke-linejoin="round" />
<path d="M1228.0 483.0L1257.0 467.5L1290.0 451.5L1315.0 441.5L1352.0 431.5L1353.0 438.0L1335.0 443.0L1312.0 451.0L1290.0 461.0L1270.0 470.5L1244.0 482.0Z" fill="#000000" />
<path d="M1352.0 432.8L1390.0 430.0L1430.0 429.5L1465.0 433.0L1466.0 434.0L1430.0 431.0L1390.0 431.8L1353.0 435.5Z" fill="#000000" />
<path d="M1385.0 430.5L1396.0 430.0L1400.0 433.0L1388.0 433.5Z" fill="#000000" />
<path d="M1410.0 430.5L1422.0 430.0L1434.0 435.5L1428.0 435.5Z" fill="#000000" />
<path d="M1466.0 444.0L1472.0 444.0L1472.0 450.0L1466.0 450.0Z" fill="#000000" />
<path d="M1470 441.500Q1482 441 1487 452" fill="none" stroke="#ddd2fa" stroke-width="1.0" stroke-linecap="round" stroke-linejoin="round" />
<path d="M1095.0 477.5L1100.0 473.0L1108.0 469.5L1122.0 469.0L1128.0 471.5L1130.0 475.0L1142.5 476.5L1141.0 481.0L1134.0 482.5L1128.0 489.0L1116.0 490.5L1108.0 488.5L1101.0 482.5Z" fill="#000000" />
<path d="M1103.0 477.5L1132.0 477.2L1128.0 480.0L1124.0 485.5L1114.0 486.5L1108.0 482.5Z" fill="#ffffff" />
<path d="M1300.0 462.5L1306.0 458.0L1314.0 454.0L1326.0 454.0L1330.0 457.0L1332.0 460.5L1343.0 461.5L1342.0 466.0L1336.0 467.5L1331.0 472.0L1320.0 473.0L1312.0 470.0L1306.0 466.5Z" fill="#000000" />
<path d="M1308.0 462.5L1334.0 462.0L1330.0 465.0L1327.0 469.0L1319.0 469.5L1313.0 466.5Z" fill="#ddd2fa" />
<path d="M1309.0 446.0L1313.0 443.5L1317.0 446.0L1314.0 450.0Z" fill="#cbbdf4" />
<path d="M406.5 528.5L430.0 525.0L457.0 521.5L462.0 527.0L460.0 537.5L440.0 537.0L412.0 533.5Z" fill="#000000" />
<path d="M407 536.500L440 541.500L467 543.500" fill="none" stroke="#000000" stroke-width="1.0" stroke-linecap="round" stroke-linejoin="round" />
<path d="M412 532L445 534.500L458 535" fill="none" stroke="#ddd2fa" stroke-width="1.0" stroke-linecap="round" stroke-linejoin="round" />
<path d="M531.0 513.0L535.0 512.5L541.0 528.0L545.0 535.0L538.0 537.5Z" fill="#000000" />
<path d="M406 527L470 517L560 500L600 493.500" fill="none" stroke="#000000" stroke-width="1.0" stroke-linecap="round" stroke-linejoin="round" />
<path d="M587 524L606 539.500" fill="none" stroke="#ffffff" stroke-width="0.6" stroke-linecap="round" stroke-linejoin="round" opacity="0.6"/>
<path d="M240.5 545.0L262.0 542.5L300.0 538.0L340.0 535.5L395.0 531.5L395.0 536.0L350.0 540.0L300.0 546.0L262.0 550.0L240.5 553.0Z" fill="#000000" />
<path d="M250 547L256 548M266 545L273 546.500M285 543L293 544.500M303 541L312 542.500M330 539L338 540M365 536L374 537" fill="none" stroke="#ddd2fa" stroke-width="1.4" stroke-linecap="round" stroke-linejoin="round" />
<path d="M465.0 558.7L485.0 557.0L507.5 556.0L509.0 565.0L510.0 572.5L500.0 576.0L487.5 577.5L480.0 572.0L472.0 566.0L467.0 563.0Z" fill="#ffffff" />
<path d="M467.0 560.0L480.0 560.0L478.0 568.0L472.0 566.0Z" fill="#cbbdf4" />
<path d="M497.0 566.0L508.0 564.0L510.0 572.5L500.0 576.0Z" fill="#eccaf4" />
<path d="M335.0 607.5L342.0 603.5L345.0 595.0L360.0 592.0L392.5 588.5L440.0 589.0L500.0 590.0L533.0 591.0L520.0 594.0L495.0 598.0L440.0 601.5L380.0 604.5Z" fill="#ffffff" />
<path d="M342.0 603.0L345.0 596.5L370.0 592.5L400.0 592.0L380.0 597.0L360.0 601.0Z" fill="#efeaff" />
<path d="M495.0 598.0L520.0 594.0L533.0 591.0L536.0 592.5L515.0 597.0Z" fill="#cbbdf4" />
<path d="M240 600L256 597.500" fill="none" stroke="#ffffff" stroke-width="1.2" stroke-linecap="round" stroke-linejoin="round" opacity="0.8"/>
<path d="M239.0 606.0L250.0 604.0L256.0 606.0L244.0 609.0Z" fill="#ffffff" opacity="0.6"/>
<path d="M905.0 634.5L914.0 630.5L925.0 627.2L1035.0 612.8L1160.0 594.8L1197.5 590.5L1160.0 597.0L1100.0 607.0L1035.0 617.5L960.0 627.5Z" fill="#ffffff" />
<path d="M923.500 627L925 633" fill="none" stroke="#000000" stroke-width="1.0" stroke-linecap="round" stroke-linejoin="round" />
<g fill="none" stroke="#3e3e3e" stroke-width="2.6" stroke-linecap="round" stroke-linejoin="round">
<path d="M207.5 626.0C206.2 629.6 201.7 639.8 200.0 647.5C198.3 655.2 197.3 663.8 197.5 672.5C197.7 681.2 198.8 692.8 201.0 700.0C203.2 707.2 202.0 713.2 211.0 716.0C220.0 718.8 239.3 717.0 255.0 717.0C270.7 717.0 290.4 717.2 305.0 716.0C319.6 714.8 329.6 713.1 342.5 710.0C355.4 706.9 370.0 700.0 382.5 697.5C395.0 695.0 407.5 695.6 417.5 695.0C427.5 694.4 427.9 693.9 442.5 693.7C457.1 693.5 487.9 693.1 505.0 693.7C522.1 694.3 532.5 697.1 545.0 697.5C557.5 697.9 571.7 699.3 580.0 696.0C588.3 692.7 592.1 683.5 595.0 677.5C597.9 671.5 597.3 667.9 597.5 660.0C597.7 652.1 594.8 638.3 596.0 630.0C597.2 621.7 601.0 617.3 605.0 610.0C609.0 602.7 617.5 590.0 620.0 586.0"/>
<path d="M187.5 670.0C192.5 667.7 207.1 659.8 217.5 656.0C227.9 652.2 238.3 650.2 250.0 647.5C261.7 644.8 278.3 639.5 287.5 639.5C296.7 639.5 295.8 645.3 305.0 647.5C314.2 649.7 330.0 651.1 342.5 652.5C355.0 653.9 365.4 655.7 380.0 656.0C394.6 656.3 420.4 653.0 430.0 654.5C439.6 656.0 435.4 658.5 437.5 665.0C439.6 671.5 441.7 688.9 442.5 693.7"/>
<path d="M221.0 667.5C220.0 669.1 216.4 673.5 215.0 677.0C213.6 680.5 212.9 686.8 212.5 688.7"/>
<path d="M290.0 657.5C285.4 659.6 271.5 663.8 262.5 670.0C253.5 676.2 240.4 690.8 236.0 695.0"/>
<path d="M300.0 661.0C300.4 662.9 305.8 666.7 302.5 672.5C299.2 678.3 283.8 692.1 280.0 696.0"/>
<path d="M326.0 673.7 L311.0 688.7"/>
<path d="M362.5 667.5C360.0 670.0 350.8 677.9 347.5 682.5C344.2 687.1 343.3 692.9 342.5 695.0"/>
<path d="M381.0 676.0 L360.0 692.5"/>
<path d="M393.7 668.7 L392.5 690.0"/>
<path d="M408.5 672.0L409.0 673.0"/>
<path d="M196.0 730.0C201.7 729.2 216.0 726.5 230.0 725.0C244.0 723.5 263.3 720.8 280.0 721.0C296.7 721.2 315.4 724.5 330.0 726.0C344.6 727.5 344.6 729.5 367.5 730.0C390.4 730.5 446.7 727.9 467.5 728.7C488.3 729.5 482.1 733.8 492.5 735.0C502.9 736.2 520.4 736.5 530.0 736.0C539.6 735.5 543.3 732.8 550.0 732.0C556.7 731.2 562.9 730.3 570.0 731.0C577.1 731.7 582.5 735.3 592.5 736.0C602.5 736.7 623.8 735.2 630.0 735.0"/>
<path d="M620.0 735.0C621.7 734.8 628.8 737.5 630.0 733.7C631.2 730.0 626.2 724.4 627.5 712.5C628.8 700.6 634.6 679.2 637.5 662.5C640.4 645.8 642.1 627.1 645.0 612.5C647.9 597.9 650.8 585.4 655.0 575.0C659.2 564.6 663.3 557.1 670.0 550.0C676.7 542.9 684.6 537.5 695.0 532.5C705.4 527.5 720.0 522.8 732.5 520.0C745.0 517.2 759.6 516.0 770.0 516.0C780.4 516.0 786.7 516.4 795.0 520.0C803.3 523.6 811.7 531.2 820.0 537.5C828.3 543.8 839.6 551.2 845.0 557.5C850.4 563.8 848.3 567.9 852.5 575.0C856.7 582.1 864.6 592.1 870.0 600.0C875.4 607.9 881.7 617.7 885.0 622.5C888.3 627.3 889.2 627.7 890.0 628.7"/>
<path d="M888.7 606.0C888.8 608.3 888.6 615.6 889.0 620.0C889.4 624.4 889.6 627.5 891.0 632.5C892.4 637.5 896.7 642.9 897.5 650.0C898.3 657.1 895.8 667.5 896.0 675.0C896.2 682.5 896.8 690.7 898.7 695.0C900.6 699.3 898.5 700.6 907.5 701.0C916.5 701.4 937.9 700.6 952.5 697.5C967.1 694.4 979.6 687.5 995.0 682.5C1010.4 677.5 1027.2 672.1 1045.0 667.5C1062.8 662.9 1085.0 656.8 1102.0 655.0C1119.0 653.2 1132.7 655.5 1147.0 657.0C1161.3 658.5 1175.8 663.7 1188.0 664.0C1200.2 664.3 1213.4 660.2 1220.0 658.7C1226.6 657.2 1225.0 655.0 1227.5 655.0C1230.0 655.0 1226.5 658.7 1235.0 658.7C1243.5 658.7 1271.4 655.6 1278.7 655.0"/>
<path d="M862.0 587.5C864.0 590.1 870.2 597.9 874.0 603.0C877.8 608.1 882.8 615.5 884.6 618.0"/>
<path d="M763.7 537.5C758.5 540.8 742.7 549.2 732.5 557.5C722.3 565.8 710.0 576.2 702.5 587.5C695.0 598.8 690.6 612.5 687.5 625.0C684.4 637.5 682.9 650.8 683.7 662.5C684.5 674.2 686.5 685.0 692.5 695.0C698.5 705.0 710.4 716.2 720.0 722.5C729.6 728.8 739.6 732.1 750.0 732.5C760.4 732.9 771.7 728.3 782.5 725.0C793.3 721.7 806.7 720.0 815.0 712.5C823.3 705.0 827.9 692.1 832.5 680.0C837.1 667.9 841.2 651.7 842.5 640.0C843.8 628.3 842.5 620.8 840.0 610.0C837.5 599.2 832.5 584.2 827.5 575.0C822.5 565.8 817.5 559.2 810.0 555.0C802.5 550.8 787.1 550.8 782.5 550.0"/>
<path d="M800.0 573.7C795.0 576.4 780.0 585.2 770.0 590.0C760.0 594.8 748.5 598.3 740.0 602.5C731.5 606.7 724.5 608.8 718.7 615.0C712.9 621.2 706.9 630.0 705.0 640.0C703.1 650.0 705.0 665.0 707.5 675.0C710.0 685.0 712.9 694.0 720.0 700.0C727.1 706.0 739.6 710.6 750.0 711.0C760.4 711.4 772.1 707.7 782.5 702.5C792.9 697.3 804.6 689.6 812.5 680.0C820.4 670.4 826.7 655.4 830.0 645.0C833.3 634.6 834.2 626.7 832.5 617.5C830.8 608.3 825.4 597.3 820.0 590.0C814.6 582.7 803.3 576.4 800.0 573.7"/>
<path d="M718.7 615.0L718.7 622.0"/>
<path d="M715.0 632.5C723.3 636.2 750.0 648.4 765.0 655.0C780.0 661.6 792.1 666.2 805.0 672.0C817.9 677.8 836.2 687.0 842.5 690.0"/>
<path d="M813.7 595.0L750.0 697.5"/>
<path d="M776.0 608.7L770.0 608.7L757.5 687.5"/>
<path d="M735.0 675.0C738.8 672.5 750.5 664.4 758.0 660.0C765.5 655.6 769.7 650.7 780.0 648.7C790.3 646.7 813.3 648.1 820.0 648.0"/>
<path d="M1330.0 518.7C1337.5 518.2 1365.0 513.7 1375.0 516.0C1385.0 518.3 1384.8 524.8 1390.0 532.5C1395.2 540.2 1404.3 551.7 1406.0 562.5C1407.7 573.3 1402.7 586.2 1400.0 597.5C1397.3 608.8 1394.2 619.2 1390.0 630.0C1385.8 640.8 1380.8 654.2 1375.0 662.5C1369.2 670.8 1362.9 677.1 1355.0 680.0C1347.1 682.9 1335.4 682.5 1327.5 680.0C1319.6 677.5 1312.9 670.4 1307.5 665.0C1302.1 659.6 1296.7 651.7 1295.0 647.5C1293.3 643.3 1297.1 641.2 1297.5 640.0"/>
<path d="M1297.5 655.0C1298.8 652.5 1302.5 648.3 1305.0 640.0C1307.5 631.7 1311.0 615.0 1312.5 605.0C1314.0 595.0 1314.8 588.3 1313.7 580.0C1312.6 571.7 1305.8 562.1 1306.0 555.0C1306.2 547.9 1311.0 543.5 1315.0 537.5C1319.0 531.5 1327.5 521.8 1330.0 518.7"/>
<path d="M1355.0 540.0C1358.3 540.0 1369.6 537.9 1375.0 540.0C1380.4 542.1 1385.0 547.9 1387.5 552.5C1390.0 557.1 1390.8 559.6 1390.0 567.5C1389.2 575.4 1385.0 590.0 1382.5 600.0C1380.0 610.0 1378.8 619.2 1375.0 627.5C1371.2 635.8 1366.2 644.6 1360.0 650.0C1353.8 655.4 1344.2 659.6 1337.5 660.0C1330.8 660.4 1323.8 656.7 1320.0 652.5C1316.2 648.3 1315.0 642.9 1315.0 635.0C1315.0 627.1 1317.9 616.7 1320.0 605.0C1322.1 593.3 1324.6 574.2 1327.5 565.0C1330.4 555.8 1332.9 554.2 1337.5 550.0C1342.1 545.8 1352.1 541.7 1355.0 540.0"/>
<path d="M1332.5 560.0C1335.4 564.2 1342.9 575.0 1350.0 585.0C1357.1 595.0 1370.8 614.2 1375.0 620.0"/>
<path d="M1380.0 560.0C1375.8 562.9 1362.5 570.0 1355.0 577.5C1347.5 585.0 1341.7 595.0 1335.0 605.0C1328.3 615.0 1318.3 632.1 1315.0 637.5"/>
<path d="M1365.0 550.0C1363.8 555.0 1359.0 568.3 1357.5 580.0C1356.0 591.7 1358.1 607.5 1356.0 620.0C1353.9 632.5 1346.8 649.2 1345.0 655.0"/>
<path d="M1326.0 587.5C1330.0 587.8 1341.8 588.2 1350.0 589.0C1358.2 589.8 1370.8 591.9 1375.0 592.5"/>
<path d="M1288.7 627.5C1286.8 628.1 1280.8 626.4 1277.5 631.0C1274.2 635.6 1270.6 646.2 1268.7 655.0C1266.8 663.8 1266.5 678.9 1266.0 683.7"/>
<path d="M1266.0 683.7L1320.0 685.0"/>
<path d="M1477.0 470.0C1477.7 475.0 1482.2 489.2 1481.0 500.0C1479.8 510.8 1471.0 525.8 1470.0 535.0C1469.0 544.2 1474.8 544.2 1475.0 555.0C1475.2 565.8 1472.2 589.2 1471.0 600.0C1469.8 610.8 1470.2 613.3 1467.5 620.0C1464.8 626.7 1462.1 635.8 1455.0 640.0C1447.9 644.2 1435.4 643.5 1425.0 645.0C1414.6 646.5 1397.9 648.1 1392.5 648.7"/>
<path d="M1490.0 588.7C1489.2 592.2 1486.5 601.5 1485.0 610.0C1483.5 618.5 1481.7 635.0 1481.0 640.0"/>
<path d="M1466.0 612.5L1482.5 612.5"/>
<path d="M1481.0 628.7C1484.2 628.5 1495.0 628.5 1500.0 627.5C1505.0 626.5 1509.2 623.3 1511.0 622.5"/>
<path d="M1466.0 647.0C1468.8 645.8 1474.3 640.2 1482.5 640.0C1490.7 639.8 1509.6 645.0 1515.0 646.0"/>
<path d="M1318.7 352.5C1322.2 352.2 1328.1 350.5 1340.0 350.7C1351.9 350.9 1373.3 352.9 1390.0 353.7C1406.7 354.5 1425.4 355.4 1440.0 355.5C1454.6 355.6 1471.2 354.7 1477.5 354.5"/>
<path d="M1322.5 361.2C1329.6 361.4 1349.6 361.9 1365.0 362.5C1380.4 363.1 1400.4 364.2 1415.0 365.0C1429.6 365.8 1441.7 365.6 1452.5 367.5C1463.3 369.4 1474.2 374.5 1480.0 376.2C1485.8 377.9 1486.2 377.3 1487.5 377.5"/>
<path d="M1477.5 354.5C1479.2 353.1 1484.2 347.7 1487.5 346.0C1490.8 344.3 1494.6 343.4 1497.5 344.5C1500.4 345.6 1503.8 349.1 1505.0 352.5C1506.2 355.9 1506.2 361.5 1505.0 365.0C1503.8 368.5 1501.7 372.7 1497.5 373.7C1493.3 374.7 1482.8 373.3 1480.0 371.0C1477.2 368.7 1481.4 362.8 1481.0 360.0C1480.6 357.2 1478.1 355.4 1477.5 354.5"/>
<path d="M1400.0 377.5C1399.8 379.6 1398.5 386.2 1398.7 390.0C1398.9 393.8 1400.6 398.3 1401.0 400.0"/>
<path d="M1418.7 375.0C1418.1 377.5 1416.0 384.4 1415.0 390.0C1414.0 395.6 1412.9 405.6 1412.5 408.7"/>
</g>
<!--CARDETAIL-->
</g>

</svg>
<span class="t" style="left:635.500px;top:776.900px;font-size:32px;font-style:italic;color:#3b3b3b;-webkit-text-stroke:0.500px #3b3b3b;transform-origin:0 50%;transform:scaleX(1.2648);" id="cap">Hehe one step ahead of you ;)</span>
<!-- p_right -->
<div class="r" style="left:1656px;top:63px;width:272px;height:952px;background:#333333;"></div>
<div class="r" style="left:1658px;top:63px;width:270px;height:23px;background:#2a2a2a;"></div>
<div class="r" style="left:1783px;top:64px;width:60px;height:22px;background:#404040;"></div>
<div class="r" style="left:1658px;top:86px;width:270px;height:60px;background:#404040;"></div>
<div class="r" style="left:1665px;top:69px;width:1px;height:10px;background:#6a6a6a;"></div>
<div class="r" style="left:1668px;top:69px;width:1px;height:10px;background:#6a6a6a;"></div>
<span class="t " style="left:1681.00px;top:67.84px;font-size:12px;color:#d2d2d2;letter-spacing:-0.467px;">Histogramm</span>
<span class="t " style="left:1751.00px;top:67.84px;font-size:12px;color:#d2d2d2;letter-spacing:-1.069px;">Farbe</span>
<span class="t " style="left:1788.50px;top:67.84px;font-size:12px;color:#ffffff;letter-spacing:-0.669px;">Farbfelder</span>
<span class="t " style="left:1847.00px;top:67.84px;font-size:12px;color:#d2d2d2;letter-spacing:-0.781px;">Pinsel</span>
<svg style="left:1911px;top:70px" width="14" height="10" viewBox="0 0 14 10" shape-rendering="crispEdges"><path d="M0 0.5H8M0 2.5H8M0 4.5H8M0 6.5H8" stroke="#e0e0e0" stroke-width="1"/><path d="M9.5 6H13.5L11.5 8.5z" fill="#d0d0d0" shape-rendering="auto"/></svg>
<svg style="left:0;top:0" width="1928" height="1048" viewBox="0 0 1928 1048">
<circle cx="1686" cy="116" r="12.6" fill="#000" stroke="#333" stroke-width="1.6"/>
<circle cx="1698" cy="128" r="12.2" fill="#fff" stroke="#3a3a3a" stroke-width="1.6"/>
<circle cx="1680" cy="134" r="5.5" fill="#fff" stroke="#333" stroke-width="1.2"/>
<path d="M1676.3 137.7L1683.7 130.3" stroke="#f03030" stroke-width="1.6"/>
<path d="M1700.5 105.5C1705 105.5 1708 109 1707.5 113.5" fill="none" stroke="#d0d0d0" stroke-width="1.3"/>
<path d="M1699 105.5L1702.5 103M1699 105.5L1702.5 108M1707.5 114.5L1705 111.5M1707.5 114.5L1710 111.5" stroke="#d0d0d0" stroke-width="1.3" fill="none"/>
<g><path d="M1722 117.5L1724 112L1730 105.5L1733.5 109L1727.5 115.5z" fill="#8e8e8e"/><path d="M1722 117.5L1726.5 113" stroke="#c8c8c8" stroke-width="1"/>
<path d="M1729 104.5L1731 102.5C1731.5 100.5 1735 99.5 1737 101.5C1739 103.500 1738 106.500 1736.500 107.5L1734.5 110z" fill="#b98a3d"/><path d="M1731.5 103C1732.500 101 1735.500 101 1736.500 102.5" stroke="#e0b870" stroke-width="1" fill="none"/></g>
<circle cx="1748" cy="110" r="7" fill="#ff0000" stroke="#333" stroke-width="1"/>
</svg>
<span class="t " style="left:1806.50px;top:112.84px;font-size:12px;color:#f0f0f0;letter-spacing:-0.601px;">Deckkraft:</span>
<div class="fld" style="left:1858px;top:109px;width:60px;height:20px;background:#2a2a2a;border-color:#262626"></div>
<span class="t " style="left:1864.50px;top:112.84px;font-size:12px;color:#f0f0f0;letter-spacing:-1.005px;">100 %</span>
<svg style="left:1907px;top:117px" width="7" height="4" viewBox="0 0 7 4"><path d="M0 0H7L3.5 4z" fill="#e8e8e8"/></svg>
<span class="t " style="left:1668.00px;top:153.84px;font-size:12px;color:#f0f0f0;letter-spacing:-0.447px;">Zuletzt verwendet:</span>
<div class="r" style="left:1765px;top:154px;width:146px;height:16px;background:#3e3e3e;"></div>
<div class="fld" style="left:1668px;top:175px;width:148px;height:22px;background:#2d2d2d;border-color:#3e3e3e"></div>
<svg style="left:1674px;top:179px" width="15" height="14" viewBox="0 0 15 14"><path d="M7.5 2L13 11.5H2z" fill="none" stroke="#0a0a0a" stroke-width="2.2" stroke-linejoin="round"/></svg>
<span class="t " style="left:1693.00px;top:179.84px;font-size:12px;color:#f0f0f0;letter-spacing:-0.629px;">Grautöne</span>
<svg style="left:1804px;top:185px" width="7" height="4" viewBox="0 0 7 4"><path d="M0 0H7L3.5 4z" fill="#e8e8e8"/></svg>
<svg style="left:1819px;top:178px" width="15" height="15" viewBox="0 0 15 15" shape-rendering="crispEdges"><g fill="none" stroke="#c8c8c8" stroke-width="1"><rect x="0.5" y="0.5" width="5" height="5"/><rect x="8.5" y="0.5" width="5" height="5"/><rect x="0.5" y="8.5" width="5" height="5"/></g><rect x="2" y="2" width="2" height="2" fill="#c8c8c8"/><rect x="10" y="2" width="2" height="2" fill="#c8c8c8"/><rect x="2" y="10" width="2" height="2" fill="#c8c8c8"/><path d="M8 11H14M11 8V14" stroke="#c8c8c8" stroke-width="2"/></svg>
<div class="r" style="left:1856px;top:178px;width:57px;height:15px;background:#222;"></div>
<div class="r" style="left:1857px;top:179px;width:13px;height:13px;background:#ffffff;"></div>
<svg style="left:1857px;top:179px" width="13" height="13" viewBox="0 0 13 13"><path d="M0.5 12.5L12.5 0.5" stroke="#f02020" stroke-width="1.3"/></svg>
<div class="r" style="left:1870px;top:179px;width:14px;height:13px;background:#000000;"></div>
<div class="r" style="left:1884px;top:179px;width:14px;height:13px;background:#808080;"></div>
<div class="r" style="left:1898px;top:179px;width:14px;height:13px;background:#ffffff;"></div>
<div class="r" style="left:1668px;top:206px;width:239.5px;height:15px;background:#1f1f1f;"></div>
<div class="r" style="left:1668.5px;top:207px;width:14.03px;height:13.3px;background:rgb(0,0,0);"></div>
<div class="r" style="left:1682.5px;top:207px;width:14.03px;height:13.3px;background:rgb(13,13,13);"></div>
<div class="r" style="left:1696.6px;top:207px;width:14.03px;height:13.3px;background:rgb(26,26,26);"></div>
<div class="r" style="left:1710.6px;top:207px;width:14.03px;height:13.3px;background:rgb(38,38,38);"></div>
<div class="r" style="left:1724.6px;top:207px;width:14.03px;height:13.3px;background:rgb(51,51,51);"></div>
<div class="r" style="left:1738.7px;top:207px;width:14.03px;height:13.3px;background:rgb(64,64,64);"></div>
<div class="r" style="left:1752.7px;top:207px;width:14.03px;height:13.3px;background:rgb(76,76,76);"></div>
<div class="r" style="left:1766.7px;top:207px;width:14.03px;height:13.3px;background:rgb(89,89,89);"></div>
<div class="r" style="left:1780.7px;top:207px;width:14.03px;height:13.3px;background:rgb(102,102,102);"></div>
<div class="r" style="left:1794.8px;top:207px;width:14.03px;height:13.3px;background:rgb(115,115,115);"></div>
<div class="r" style="left:1808.8px;top:207px;width:14.03px;height:13.3px;background:rgb(128,128,128);"></div>
<div class="r" style="left:1822.8px;top:207px;width:14.03px;height:13.3px;background:rgb(140,140,140);"></div>
<div class="r" style="left:1836.9px;top:207px;width:14.03px;height:13.3px;background:rgb(153,153,153);"></div>
<div class="r" style="left:1850.9px;top:207px;width:14.03px;height:13.3px;background:rgb(166,166,166);"></div>
<div class="r" style="left:1864.9px;top:207px;width:14.03px;height:13.3px;background:rgb(178,178,178);"></div>
<div class="r" style="left:1879.0px;top:207px;width:14.03px;height:13.3px;background:rgb(191,191,191);"></div>
<div class="r" style="left:1893.0px;top:207px;width:14.03px;height:13.3px;background:rgb(204,204,204);"></div>
<div class="r" style="left:1668px;top:220.5px;width:57px;height:14px;background:#1f1f1f;"></div>
<div class="r" style="left:1668.5px;top:221.3px;width:14.03px;height:12.7px;background:rgb(217,217,217);"></div>
<div class="r" style="left:1682.5px;top:221.3px;width:14.03px;height:12.7px;background:rgb(230,230,230);"></div>
<div class="r" style="left:1696.6px;top:221.3px;width:14.03px;height:12.7px;background:rgb(242,242,242);"></div>
<div class="r" style="left:1710.6px;top:221.3px;width:13.5px;height:12.7px;background:rgb(255,255,255);"></div>
<div class="r" style="left:1711px;top:221.3px;width:13.6px;height:12.7px;background:#ffffff;border:1.5px solid #555;"></div>
<div class="r" style="left:1668.5px;top:281px;width:249px;height:20px;background:#404040;border-radius:2px"></div>
<svg style="left:1673px;top:284px" width="14" height="14" viewBox="0 0 14 14"><circle cx="5.5" cy="5.5" r="4" fill="none" stroke="#e0e0e0" stroke-width="1.2"/><path d="M8.5 8.5L12.5 12.5" stroke="#e0e0e0" stroke-width="1.4"/></svg>
<span class="t " style="left:1690.00px;top:285.84px;font-size:12px;color:#9a9a9a;letter-spacing:-1.005px;">Suche</span>
<div class="r" style="left:1658px;top:308px;width:270px;height:24px;background:#2a2a2a;"></div>
<div class="r" style="left:1740px;top:310px;width:47px;height:22px;background:#404040;"></div>
<div class="r" style="left:1658px;top:332px;width:270px;height:28px;background:#404040;"></div>
<div class="r" style="left:1665px;top:315px;width:1px;height:10px;background:#6a6a6a;"></div>
<div class="r" style="left:1668px;top:315px;width:1px;height:10px;background:#6a6a6a;"></div>
<span class="t " style="left:1681.00px;top:313.84px;font-size:12px;color:#d2d2d2;letter-spacing:-0.783px;">Anpassung</span>
<span class="t " style="left:1745.00px;top:313.84px;font-size:12px;color:#ffffff;letter-spacing:-0.895px;">Ebenen</span>
<span class="t " style="left:1791.00px;top:313.84px;font-size:12px;color:#d2d2d2;letter-spacing:-0.591px;">Effekte</span>
<span class="t " style="left:1834.00px;top:313.84px;font-size:12px;color:#d2d2d2;letter-spacing:-0.569px;">Stile</span>
<svg style="left:1911px;top:316px" width="14" height="10" viewBox="0 0 14 10" shape-rendering="crispEdges"><path d="M0 0.5H8M0 2.5H8M0 4.5H8M0 6.5H8" stroke="#e0e0e0" stroke-width="1"/><path d="M9.5 6H13.5L11.5 8.5z" fill="#d0d0d0" shape-rendering="auto"/></svg>
<span class="t " style="left:1666.00px;top:341.69px;font-size:11px;color:#f0f0f0;letter-spacing:-0.551px;">Deckkraft:</span>
<div class="fld" style="left:1714px;top:336px;width:75px;height:20px;background:#2a2a2a;border-color:#262626"></div>
<span class="t " style="left:1720.00px;top:339.84px;font-size:12px;color:#f0f0f0;letter-spacing:-0.905px;">100 %</span>
<svg style="left:1778px;top:344px" width="7" height="4" viewBox="0 0 7 4"><path d="M0 0H7L3.5 4z" fill="#e8e8e8"/></svg>
<div class="fld" style="left:1793px;top:336px;width:87px;height:20px;background:#2a2a2a;border-color:#262626"></div>
<span class="t " style="left:1798.00px;top:340.84px;font-size:12px;color:#f0f0f0;letter-spacing:-0.445px;">Normal</span>
<svg style="left:1868px;top:344.5px" width="7" height="4" viewBox="0 0 7 4"><path d="M0 0H7L3.5 4z" fill="#e8e8e8"/></svg>
<svg style="left:1884px;top:339px" width="14" height="14" viewBox="-7 -7 14 14"><g fill="#bdbdbd"><circle r="4.6"/><rect x="-1.3" y="-6.6" width="2.6" height="3.2" transform="rotate(0)"/><rect x="-1.3" y="-6.6" width="2.6" height="3.2" transform="rotate(45)"/><rect x="-1.3" y="-6.6" width="2.6" height="3.2" transform="rotate(90)"/><rect x="-1.3" y="-6.6" width="2.6" height="3.2" transform="rotate(135)"/><rect x="-1.3" y="-6.6" width="2.6" height="3.2" transform="rotate(180)"/><rect x="-1.3" y="-6.6" width="2.6" height="3.2" transform="rotate(225)"/><rect x="-1.3" y="-6.6" width="2.6" height="3.2" transform="rotate(270)"/><rect x="-1.3" y="-6.6" width="2.6" height="3.2" transform="rotate(315)"/></g><circle r="1.9" fill="#404040"/></svg>
<svg style="left:1908px;top:339px" width="10" height="13" viewBox="0 0 10 13"><path d="M2.2 6V3.8C2.2 1.200 7.800 1.200 7.800 3.8V6" fill="none" stroke="#bdbdbd" stroke-width="1.5"/><rect x="0.500" y="5.5" width="9" height="7" rx="1" fill="#bdbdbd"/></svg>
<div class="r" style="left:1658px;top:361px;width:252px;height:30.5px;background:#648fd0;"></div>
<div class="r" style="left:1679px;top:362px;width:28px;height:28px;background:#ffffff;border:1px solid #0a0a0a"></div>
<svg style="left:1694px;top:377px" width="11" height="11" viewBox="0 0 11 11"><circle cx="5.5" cy="5.5" r="4.5" fill="#fff" stroke="#222" stroke-width="1.2"/><path d="M5.5 1A4.500 4.500 0 0 0 2.300 8.700L8.700 2.300A4.500 4.500 0 0 0 5.500 1z" fill="#222"/></svg>
<span class="t " style="left:1711.00px;top:370.84px;font-size:12px;color:#d4dcec;letter-spacing:-0.121px;">(Anpassung - Gradationskurve...</span>
<svg style="left:1894px;top:369.5px" width="13" height="13" viewBox="0 0 13 13"><rect x="0.75" y="0.75" width="11.5" height="11.5" rx="1.5" fill="none" stroke="#c9d2e6" stroke-width="1.3"/><path d="M3 6.5L5.500 9.500L10 3.200" fill="none" stroke="#c9d2e6" stroke-width="1.4"/></svg>
<div class="r" style="left:1658px;top:391.5px;width:252px;height:30.5px;background:#3a3a3a;"></div>
<div class="r" style="left:1658px;top:391px;width:252px;height:1px;background:#1c1c1c;"></div>
<div class="r" style="left:1658px;top:421.5px;width:252px;height:1.2px;background:#0e0e0e;"></div>
<div class="r" style="left:1679px;top:393px;width:28px;height:28px;background:#000000;border:1px solid #0a0a0a"></div>
<div class="r" style="left:1680px;top:394px;width:26px;height:5px;background:#333;"></div>
<div class="r" style="left:1680px;top:414.5px;width:26px;height:5.5px;background:#333;"></div>
<svg style="left:1680px;top:399px" width="26" height="16" viewBox="0 0 26 16"><path d="M3.5 9.500C8 8.500 10 6.500 14 6L20 6.500L22.500 7.500C18 7.500 10 9 3.500 9.500z" fill="#b8c4d8" opacity="0.8"/></svg>
<span class="t " style="left:1711.00px;top:401.84px;font-size:12px;color:#ffffff;font-weight:bold;letter-spacing:0.031px;">Hintergrund</span>
<span class="t " style="left:1784.50px;top:401.84px;font-size:12px;color:#c4c4c4;letter-spacing:-0.429px;">(Pixel)</span>
<svg style="left:1873px;top:400.5px" width="10" height="13" viewBox="0 0 10 13"><path d="M2.2 6V3.8C2.2 1.200 7.800 1.200 7.800 3.8V6" fill="none" stroke="#c8c8c8" stroke-width="1.5"/><rect x="0.500" y="5.5" width="9" height="7" rx="1" fill="#c8c8c8"/></svg>
<svg style="left:1894px;top:400.5px" width="13" height="13" viewBox="0 0 13 13"><rect x="0.75" y="0.75" width="11.5" height="11.5" rx="1.5" fill="none" stroke="#e8e8e8" stroke-width="1.3"/><path d="M3 6.5L5.500 9.500L10 3.200" fill="none" stroke="#e8e8e8" stroke-width="1.4"/></svg>
<!-- p_curves -->
<div class="r" style="left:1549px;top:486px;width:400px;height:521px;background:#404040;border-left:1px solid #2a2a2a;border-top:1px solid #2a2a2a;border-bottom:1px solid #2a2a2a"></div>
<div class="r" style="left:1550px;top:487px;width:399px;height:22px;background:#3b3b3b;"></div>
<div class="r" style="left:1550px;top:509px;width:399px;height:30px;background:#4a4a4a;"></div>
<div class="r" style="left:1550px;top:539px;width:399px;height:1px;background:#333;"></div>
<span class="t " style="left:1714.00px;top:492.84px;font-size:12px;color:#f0f0f0;letter-spacing:-0.076px;">Gradationskurven</span>
<div class="btn" style="left:1558px;top:514.5px;width:117.5px;height:20px;background:#3c3c3c;border-color:#333"></div>
<span class="t " style="left:1563.00px;top:518.84px;font-size:12px;color:#f4f4f4;letter-spacing:0.014px;">Vorgabe hinzufügen</span>
<div class="btn" style="left:1723px;top:514.5px;width:98px;height:20px;background:#3c3c3c;border-color:#333"></div>
<span class="t " style="left:1727.50px;top:518.84px;font-size:12px;color:#f4f4f4;letter-spacing:-0.067px;">Zusammenlegen</span>
<div class="btn" style="left:1829px;top:514.5px;width:53.5px;height:20px;background:#3c3c3c;border-color:#333"></div>
<span class="t " style="left:1834.00px;top:518.84px;font-size:12px;color:#f4f4f4;letter-spacing:-0.267px;">Löschen</span>
<div class="btn" style="left:1890px;top:514.5px;width:60px;height:20px;background:#3c3c3c;border-color:#333"></div>
<span class="t " style="left:1894.50px;top:518.84px;font-size:12px;color:#f4f4f4;letter-spacing:-0.169px;">Zurücksetzen</span>
<div class="r" style="left:1565.5px;top:558px;width:398px;height:343px;background:#1a1a1a;"></div>
<svg style="left:0;top:0" width="1928" height="1048" viewBox="0 0 1928 1048">
<path d="M1567 900L1567.0 731.8L1567.5 559.0L1568.0 559.0L1568.5 559.0L1569.0 559.0L1569.5 559.0L1570.0 559.0L1570.5 559.0L1571.0 559.0L1571.5 667.8L1572.0 821.1L1572.5 864.2L1573.0 872.3L1573.5 873.8L1574.0 874.2L1574.5 875.4L1575.0 876.2L1575.5 877.4L1576.0 879.1L1576.5 880.2L1577.0 881.4L1577.5 882.8L1578.0 882.9L1578.5 883.4L1579.0 883.9L1579.5 884.2L1580.0 883.7L1580.5 884.0L1581.0 884.0L1581.5 884.1L1582.0 884.6L1582.5 884.9L1583.0 885.9L1583.5 886.1L1584.0 887.1L1584.5 887.3L1585.0 887.8L1585.5 888.7L1586.0 888.7L1586.5 888.3L1587.0 886.9L1587.5 885.4L1588.0 880.8L1588.5 870.5L1589.0 849.7L1589.5 820.9L1590.0 796.3L1590.5 790.7L1591.0 806.5L1591.5 830.1L1592.0 848.4L1592.5 857.0L1593.0 860.0L1593.5 860.9L1594.0 862.1L1594.5 864.0L1595.0 865.2L1595.5 867.2L1596.0 869.4L1596.5 871.6L1597.0 873.1L1597.5 874.7L1598.0 875.0L1598.5 875.5L1599.0 875.6L1599.5 875.4L1600.0 874.2L1600.5 873.5L1601.0 873.7L1601.5 872.9L1602.0 873.1L1602.5 873.2L1603.0 872.5L1603.5 870.0L1604.0 865.5L1604.5 859.4L1605.0 852.0L1605.5 848.9L1606.0 850.9L1606.5 859.3L1607.0 869.3L1607.5 878.6L1608.0 885.4L1608.5 888.6L1609.0 890.7L1609.5 891.3L1610.0 890.2L1610.5 889.0L1611.0 886.0L1611.5 881.9L1612.0 876.9L1612.5 872.6L1613.0 869.0L1613.5 866.8L1614.0 868.1L1614.5 870.4L1615.0 874.5L1615.5 879.1L1616.0 882.5L1616.5 885.0L1617.0 886.3L1617.5 887.1L1618.0 887.3L1618.5 887.2L1619.0 886.8L1619.5 886.9L1620.0 886.8L1620.5 886.4L1621.0 886.7L1621.5 886.6L1622.0 886.0L1622.5 886.3L1623.0 886.3L1623.5 886.8L1624.0 886.4L1624.5 886.2L1625.0 886.5L1625.5 885.6L1626.0 885.1L1626.5 884.9L1627.0 883.5L1627.5 882.4L1628.0 881.1L1628.5 881.0L1629.0 880.1L1629.5 880.2L1630.0 881.9L1630.5 883.0L1631.0 883.4L1631.5 884.6L1632.0 887.3L1632.5 888.5L1633.0 889.6L1633.5 891.2L1634.0 891.9L1634.5 892.5L1635.0 892.8L1635.5 892.5L1636.0 892.9L1636.5 892.5L1637.0 891.3L1637.5 891.9L1638.0 890.3L1638.5 889.2L1639.0 889.3L1639.5 889.0L1640.0 887.9L1640.5 888.9L1641.0 889.4L1641.5 889.6L1642.0 889.9L1642.5 891.7L1643.0 892.0L1643.5 892.5L1644.0 892.1L1644.5 893.0L1645.0 892.4L1645.5 893.5L1646.0 893.2L1646.5 892.6L1647.0 892.1L1647.5 892.7L1648.0 892.9L1648.5 892.9L1649.0 892.2L1649.5 892.6L1650.0 891.5L1650.5 891.4L1651.0 892.4L1651.5 892.2L1652.0 891.3L1652.5 891.5L1653.0 891.3L1653.5 892.0L1654.0 892.4L1654.5 892.2L1655.0 891.4L1655.5 892.4L1656.0 892.3L1656.5 892.3L1657.0 892.4L1657.5 892.5L1658.0 891.9L1658.5 893.2L1659.0 893.6L1659.5 892.2L1660.0 892.5L1660.5 892.5L1661.0 893.5L1661.5 892.8L1662.0 893.0L1662.5 894.3L1663.0 893.6L1663.5 893.5L1664.0 893.9L1664.5 894.3L1665.0 894.8L1665.5 894.8L1666.0 895.1L1666.5 895.4L1667.0 894.7L1667.5 895.2L1668.0 894.5L1668.5 895.8L1669.0 894.4L1669.5 894.8L1670.0 894.5L1670.5 894.6L1671.0 894.6L1671.5 895.1L1672.0 896.1L1672.5 894.9L1673.0 895.8L1673.5 895.6L1674.0 895.1L1674.5 895.3L1675.0 895.5L1675.5 894.6L1676.0 895.1L1676.5 895.6L1677.0 895.7L1677.5 894.7L1678.0 895.3L1678.5 894.8L1679.0 895.5L1679.5 895.8L1680.0 895.2L1680.5 894.8L1681.0 895.8L1681.5 894.8L1682.0 894.6L1682.5 894.7L1683.0 894.7L1683.5 896.0L1684.0 895.0L1684.5 894.6L1685.0 895.9L1685.5 895.6L1686.0 895.6L1686.5 895.2L1687.0 895.3L1687.5 895.2L1688.0 894.8L1688.5 896.0L1689.0 895.9L1689.5 895.8L1690.0 895.8L1690.5 895.9L1691.0 894.5L1691.5 894.7L1692.0 895.9L1692.5 895.3L1693.0 895.6L1693.5 895.6L1694.0 895.5L1694.5 895.1L1695.0 895.2L1695.5 895.6L1696.0 895.8L1696.5 895.6L1697.0 896.0L1697.5 895.3L1698.0 895.1L1698.5 895.6L1699.0 896.1L1699.5 896.0L1700.0 895.7L1700.5 895.4L1701.0 895.1L1701.5 895.8L1702.0 895.1L1702.5 895.4L1703.0 895.8L1703.5 895.9L1704.0 895.7L1704.5 895.4L1705.0 895.9L1705.5 895.5L1706.0 895.9L1706.5 896.2L1707.0 895.8L1707.5 895.6L1708.0 896.6L1708.5 896.0L1709.0 896.0L1709.5 895.3L1710.0 895.2L1710.5 896.0L1711.0 895.1L1711.5 895.1L1712.0 895.8L1712.5 895.3L1713.0 895.5L1713.5 894.1L1714.0 894.0L1714.5 893.3L1715.0 893.2L1715.5 893.1L1716.0 892.8L1716.5 892.9L1717.0 893.6L1717.5 892.9L1718.0 894.1L1718.5 894.1L1719.0 893.5L1719.5 895.0L1720.0 895.3L1720.5 895.7L1721.0 894.8L1721.5 896.3L1722.0 896.8L1722.5 895.7L1723.0 897.0L1723.5 895.9L1724.0 896.2L1724.5 895.8L1725.0 895.4L1725.5 895.7L1726.0 894.9L1726.5 895.6L1727.0 893.8L1727.5 893.6L1728.0 892.8L1728.5 893.4L1729.0 892.3L1729.5 892.2L1730.0 893.9L1730.5 894.1L1731.0 894.3L1731.5 894.6L1732.0 896.1L1732.5 896.7L1733.0 897.0L1733.5 896.8L1734.0 896.8L1734.5 897.5L1735.0 897.6L1735.5 897.6L1736.0 897.8L1736.5 897.7L1737.0 898.2L1737.5 897.6L1738.0 896.9L1738.5 897.8L1739.0 897.3L1739.5 898.2L1740.0 897.4L1740.5 897.3L1741.0 897.4L1741.5 897.7L1742.0 897.8L1742.5 897.5L1743.0 897.1L1743.5 898.4L1744.0 898.5L1744.5 897.4L1745.0 897.2L1745.5 897.8L1746.0 898.0L1746.5 897.5L1747.0 898.4L1747.5 898.3L1748.0 898.4L1748.5 897.8L1749.0 898.2L1749.5 898.4L1750.0 897.6L1750.5 897.2L1751.0 898.3L1751.5 897.6L1752.0 898.1L1752.5 897.4L1753.0 897.9L1753.5 898.4L1754.0 898.5L1754.5 898.8L1755.0 898.1L1755.5 898.2L1756.0 898.6L1756.5 898.3L1757.0 898.3L1757.5 897.6L1758.0 898.6L1758.5 897.2L1759.0 897.9L1759.5 897.6L1760.0 897.6L1760.5 896.6L1761.0 896.3L1761.5 896.3L1762.0 896.0L1762.5 895.4L1763.0 895.0L1763.5 895.9L1764.0 895.6L1764.5 895.6L1765.0 896.9L1765.5 897.6L1766.0 898.0L1766.5 897.4L1767.0 897.7L1767.5 897.3L1768.0 897.5L1768.5 898.5L1769.0 898.6L1769.5 898.5L1770.0 898.7L1770.5 897.8L1771.0 897.6L1771.5 897.5L1772.0 898.6L1772.5 897.6L1773.0 898.5L1773.5 898.3L1774.0 897.8L1774.5 898.8L1775.0 898.8L1775.5 897.6L1776.0 898.5L1776.5 898.4L1777.0 898.1L1777.5 897.9L1778.0 899.0L1778.5 898.4L1779.0 898.3L1779.5 898.2L1780.0 898.7L1780.5 898.1L1781.0 897.5L1781.5 898.4L1782.0 898.1L1782.5 898.8L1783.0 898.6L1783.5 897.9L1784.0 898.8L1784.5 897.6L1785.0 897.5L1785.5 898.8L1786.0 897.5L1786.5 898.4L1787.0 897.8L1787.5 897.8L1788.0 898.5L1788.5 897.9L1789.0 897.9L1789.5 897.7L1790.0 898.6L1790.5 897.8L1791.0 897.5L1791.5 897.9L1792.0 898.1L1792.5 898.8L1793.0 898.2L1793.5 898.4L1794.0 897.8L1794.5 897.9L1795.0 898.1L1795.5 898.7L1796.0 898.0L1796.5 898.0L1797.0 898.7L1797.5 897.6L1798.0 898.0L1798.5 898.8L1799.0 897.5L1799.5 898.8L1800.0 898.5L1800.5 897.8L1801.0 898.0L1801.5 898.1L1802.0 898.0L1802.5 898.3L1803.0 898.5L1803.5 898.7L1804.0 898.9L1804.5 897.9L1805.0 897.8L1805.5 898.1L1806.0 897.8L1806.5 898.4L1807.0 898.6L1807.5 898.4L1808.0 897.6L1808.5 898.9L1809.0 898.2L1809.5 898.6L1810.0 897.8L1810.5 898.4L1811.0 898.5L1811.5 898.4L1812.0 898.1L1812.5 897.8L1813.0 898.4L1813.5 897.6L1814.0 898.8L1814.5 898.6L1815.0 898.8L1815.5 898.8L1816.0 897.8L1816.5 897.8L1817.0 898.7L1817.5 898.7L1818.0 898.3L1818.5 897.8L1819.0 897.7L1819.5 897.8L1820.0 898.1L1820.5 898.8L1821.0 898.4L1821.5 898.7L1822.0 898.2L1822.5 898.1L1823.0 898.7L1823.5 898.6L1824.0 897.7L1824.5 899.0L1825.0 897.7L1825.5 897.6L1826.0 897.5L1826.5 898.4L1827.0 898.1L1827.5 898.1L1828.0 898.0L1828.5 897.4L1829.0 897.9L1829.5 898.5L1830.0 897.6L1830.5 898.2L1831.0 898.0L1831.5 897.8L1832.0 899.0L1832.5 897.8L1833.0 897.9L1833.5 898.2L1834.0 898.2L1834.5 898.3L1835.0 898.7L1835.5 898.2L1836.0 898.9L1836.5 898.2L1837.0 898.0L1837.5 898.3L1838.0 898.1L1838.5 897.5L1839.0 897.6L1839.5 898.8L1840.0 897.7L1840.5 898.0L1841.0 898.9L1841.5 898.4L1842.0 898.6L1842.5 898.9L1843.0 898.1L1843.5 897.5L1844.0 898.5L1844.5 897.6L1845.0 897.9L1845.5 898.8L1846.0 897.6L1846.5 898.0L1847.0 897.5L1847.5 897.9L1848.0 897.8L1848.5 898.5L1849.0 897.7L1849.5 897.5L1850.0 897.6L1850.5 898.3L1851.0 897.8L1851.5 898.2L1852.0 898.8L1852.5 898.9L1853.0 898.9L1853.5 898.7L1854.0 898.7L1854.5 898.2L1855.0 897.9L1855.5 898.1L1856.0 898.3L1856.5 898.0L1857.0 898.5L1857.5 898.3L1858.0 897.8L1858.5 898.4L1859.0 898.7L1859.5 897.6L1860.0 897.8L1860.5 898.4L1861.0 898.4L1861.5 898.2L1862.0 898.0L1862.5 898.6L1863.0 899.0L1863.5 898.7L1864.0 897.7L1864.5 898.8L1865.0 898.3L1865.5 898.7L1866.0 898.7L1866.5 898.7L1867.0 898.4L1867.5 898.7L1868.0 899.0L1868.5 898.8L1869.0 898.7L1869.5 898.2L1870.0 898.9L1870.5 899.0L1871.0 898.3L1871.5 898.3L1872.0 897.9L1872.5 898.9L1873.0 898.4L1873.5 898.4L1874.0 899.0L1874.5 897.5L1875.0 898.6L1875.5 898.8L1876.0 898.2L1876.5 898.7L1877.0 898.0L1877.5 898.4L1878.0 898.8L1878.5 898.9L1879.0 897.8L1879.5 898.6L1880.0 897.7L1880.5 898.3L1881.0 897.5L1881.5 898.5L1882.0 898.6L1882.5 898.6L1883.0 897.7L1883.5 898.0L1884.0 898.4L1884.5 898.9L1885.0 897.9L1885.5 897.4L1886.0 898.1L1886.5 899.0L1887.0 899.0L1887.5 898.9L1888.0 898.7L1888.5 898.9L1889.0 898.9L1889.5 898.0L1890.0 897.6L1890.5 898.7L1891.0 897.4L1891.5 898.2L1892.0 897.7L1892.5 897.5L1893.0 897.5L1893.5 898.9L1894.0 898.5L1894.5 898.0L1895.0 897.5L1895.5 898.9L1896.0 898.5L1896.5 897.6L1897.0 898.8L1897.5 898.4L1898.0 898.5L1898.5 897.9L1899.0 897.5L1899.5 898.7L1900.0 897.8L1900.5 897.8L1901.0 897.7L1901.5 898.1L1902.0 897.5L1902.5 898.4L1903.0 898.3L1903.5 898.6L1904.0 897.8L1904.5 898.2L1905.0 898.6L1905.5 898.7L1906.0 897.8L1906.5 898.0L1907.0 897.9L1907.5 898.4L1908.0 898.2L1908.5 898.8L1909.0 897.9L1909.5 899.0L1910.0 898.3L1910.5 897.8L1911.0 897.9L1911.5 898.8L1912.0 898.6L1912.5 897.7L1913.0 898.0L1913.5 897.6L1914.0 897.6L1914.5 898.3L1915.0 897.6L1915.5 897.8L1916.0 898.5L1916.5 898.4L1917.0 898.9L1917.5 898.4L1918.0 897.5L1918.5 898.8L1919.0 898.1L1919.5 898.8L1920.0 898.9L1920.5 898.0L1921.0 898.6L1921.5 898.9L1922.0 898.8L1922.5 898.0L1923.0 898.1L1923.5 899.0L1924.0 898.6L1924.5 897.5L1925.0 898.6L1925.5 898.1L1926.0 898.3L1926.5 897.8L1927.0 898.0L1927.5 897.7L1928.0 898.1L1928.5 898.7L1929.0 898.7L1929.5 898.9L1930.0 897.7L1930.5 898.8L1931.0 899.0L1931.5 897.5L1932.0 898.7L1932.5 897.6L1933.0 898.9L1933.5 898.3L1934.0 898.6L1934.5 897.7L1935.0 898.0L1935.5 898.0L1936.0 897.8L1936.5 897.6L1937.0 898.4L1937.5 898.0L1938.0 898.3L1938.5 898.8L1939.0 897.7L1939.5 898.0L1940.0 897.7L1940.5 898.7L1941.0 898.1L1941.5 898.3L1942.0 897.8L1942.5 898.9L1943.0 898.4L1943.5 898.2L1944.0 898.9L1944.5 898.1L1945.0 897.8L1945.5 898.3L1946.0 898.0L1946.5 898.0L1947.0 898.7L1947.5 898.4L1948.0 897.4L1948.5 898.5L1949.0 898.3L1949.5 898.9L1950.0 898.7L1950.5 898.7L1951.0 897.5L1951.5 897.8L1952.0 897.6L1952.5 897.4L1953.0 898.0L1953.5 897.5L1954.0 898.1L1954.5 898.3L1955.0 897.5L1955.5 897.6L1956.0 897.5L1956.5 898.2L1957.0 897.8L1957.5 898.3L1958.0 897.4L1958.5 897.5L1959.0 898.5L1959.5 897.5L1960.0 898.7L1960.5 898.8L1961.0 897.8L1961.5 898.5L1962.0 898.2L1962.5 898.0L1963 900Z" fill="#555555"/><path d="M1567.0 731.8L1567.5 559.0L1568.0 559.0L1568.5 559.0L1569.0 559.0L1569.5 559.0L1570.0 559.0L1570.5 559.0L1571.0 559.0L1571.5 667.8L1572.0 821.1L1572.5 864.2L1573.0 872.3L1573.5 873.8L1574.0 874.2L1574.5 875.4L1575.0 876.2L1575.5 877.4L1576.0 879.1L1576.5 880.2L1577.0 881.4L1577.5 882.8L1578.0 882.9L1578.5 883.4L1579.0 883.9L1579.5 884.2L1580.0 883.7L1580.5 884.0L1581.0 884.0L1581.5 884.1L1582.0 884.6L1582.5 884.9L1583.0 885.9L1583.5 886.1L1584.0 887.1L1584.5 887.3L1585.0 887.8L1585.5 888.7L1586.0 888.7L1586.5 888.3L1587.0 886.9L1587.5 885.4L1588.0 880.8L1588.5 870.5L1589.0 849.7L1589.5 820.9L1590.0 796.3L1590.5 790.7L1591.0 806.5L1591.5 830.1L1592.0 848.4L1592.5 857.0L1593.0 860.0L1593.5 860.9L1594.0 862.1L1594.5 864.0L1595.0 865.2L1595.5 867.2L1596.0 869.4L1596.5 871.6L1597.0 873.1L1597.5 874.7L1598.0 875.0L1598.5 875.5L1599.0 875.6L1599.5 875.4L1600.0 874.2L1600.5 873.5L1601.0 873.7L1601.5 872.9L1602.0 873.1L1602.5 873.2L1603.0 872.5L1603.5 870.0L1604.0 865.5L1604.5 859.4L1605.0 852.0L1605.5 848.9L1606.0 850.9L1606.5 859.3L1607.0 869.3L1607.5 878.6L1608.0 885.4L1608.5 888.6L1609.0 890.7L1609.5 891.3L1610.0 890.2L1610.5 889.0L1611.0 886.0L1611.5 881.9L1612.0 876.9L1612.5 872.6L1613.0 869.0L1613.5 866.8L1614.0 868.1L1614.5 870.4L1615.0 874.5L1615.5 879.1L1616.0 882.5L1616.5 885.0L1617.0 886.3L1617.5 887.1L1618.0 887.3L1618.5 887.2L1619.0 886.8L1619.5 886.9L1620.0 886.8L1620.5 886.4L1621.0 886.7L1621.5 886.6L1622.0 886.0L1622.5 886.3L1623.0 886.3L1623.5 886.8L1624.0 886.4L1624.5 886.2L1625.0 886.5L1625.5 885.6L1626.0 885.1L1626.5 884.9L1627.0 883.5L1627.5 882.4L1628.0 881.1L1628.5 881.0L1629.0 880.1L1629.5 880.2L1630.0 881.9L1630.5 883.0L1631.0 883.4L1631.5 884.6L1632.0 887.3L1632.5 888.5L1633.0 889.6L1633.5 891.2L1634.0 891.9L1634.5 892.5L1635.0 892.8L1635.5 892.5L1636.0 892.9L1636.5 892.5L1637.0 891.3L1637.5 891.9L1638.0 890.3L1638.5 889.2L1639.0 889.3L1639.5 889.0L1640.0 887.9L1640.5 888.9L1641.0 889.4L1641.5 889.6L1642.0 889.9L1642.5 891.7L1643.0 892.0L1643.5 892.5L1644.0 892.1L1644.5 893.0L1645.0 892.4L1645.5 893.5L1646.0 893.2L1646.5 892.6L1647.0 892.1L1647.5 892.7L1648.0 892.9L1648.5 892.9L1649.0 892.2L1649.5 892.6L1650.0 891.5L1650.5 891.4L1651.0 892.4L1651.5 892.2L1652.0 891.3L1652.5 891.5L1653.0 891.3L1653.5 892.0L1654.0 892.4L1654.5 892.2L1655.0 891.4L1655.5 892.4L1656.0 892.3L1656.5 892.3L1657.0 892.4L1657.5 892.5L1658.0 891.9L1658.5 893.2L1659.0 893.6L1659.5 892.2L1660.0 892.5L1660.5 892.5L1661.0 893.5L1661.5 892.8L1662.0 893.0L1662.5 894.3L1663.0 893.6L1663.5 893.5L1664.0 893.9L1664.5 894.3L1665.0 894.8L1665.5 894.8L1666.0 895.1L1666.5 895.4L1667.0 894.7L1667.5 895.2L1668.0 894.5L1668.5 895.8L1669.0 894.4L1669.5 894.8L1670.0 894.5L1670.5 894.6L1671.0 894.6L1671.5 895.1L1672.0 896.1L1672.5 894.9L1673.0 895.8L1673.5 895.6L1674.0 895.1L1674.5 895.3L1675.0 895.5L1675.5 894.6L1676.0 895.1L1676.5 895.6L1677.0 895.7L1677.5 894.7L1678.0 895.3L1678.5 894.8L1679.0 895.5L1679.5 895.8L1680.0 895.2L1680.5 894.8L1681.0 895.8L1681.5 894.8L1682.0 894.6L1682.5 894.7L1683.0 894.7L1683.5 896.0L1684.0 895.0L1684.5 894.6L1685.0 895.9L1685.5 895.6L1686.0 895.6L1686.5 895.2L1687.0 895.3L1687.5 895.2L1688.0 894.8L1688.5 896.0L1689.0 895.9L1689.5 895.8L1690.0 895.8L1690.5 895.9L1691.0 894.5L1691.5 894.7L1692.0 895.9L1692.5 895.3L1693.0 895.6L1693.5 895.6L1694.0 895.5L1694.5 895.1L1695.0 895.2L1695.5 895.6L1696.0 895.8L1696.5 895.6L1697.0 896.0L1697.5 895.3L1698.0 895.1L1698.5 895.6L1699.0 896.1L1699.5 896.0L1700.0 895.7L1700.5 895.4L1701.0 895.1L1701.5 895.8L1702.0 895.1L1702.5 895.4L1703.0 895.8L1703.5 895.9L1704.0 895.7L1704.5 895.4L1705.0 895.9L1705.5 895.5L1706.0 895.9L1706.5 896.2L1707.0 895.8L1707.5 895.6L1708.0 896.6L1708.5 896.0L1709.0 896.0L1709.5 895.3L1710.0 895.2L1710.5 896.0L1711.0 895.1L1711.5 895.1L1712.0 895.8L1712.5 895.3L1713.0 895.5L1713.5 894.1L1714.0 894.0L1714.5 893.3L1715.0 893.2L1715.5 893.1L1716.0 892.8L1716.5 892.9L1717.0 893.6L1717.5 892.9L1718.0 894.1L1718.5 894.1L1719.0 893.5L1719.5 895.0L1720.0 895.3L1720.5 895.7L1721.0 894.8L1721.5 896.3L1722.0 896.8L1722.5 895.7L1723.0 897.0L1723.5 895.9L1724.0 896.2L1724.5 895.8L1725.0 895.4L1725.5 895.7L1726.0 894.9L1726.5 895.6L1727.0 893.8L1727.5 893.6L1728.0 892.8L1728.5 893.4L1729.0 892.3L1729.5 892.2L1730.0 893.9L1730.5 894.1L1731.0 894.3L1731.5 894.6L1732.0 896.1L1732.5 896.7L1733.0 897.0L1733.5 896.8L1734.0 896.8L1734.5 897.5L1735.0 897.6L1735.5 897.6L1736.0 897.8L1736.5 897.7L1737.0 898.2L1737.5 897.6L1738.0 896.9L1738.5 897.8L1739.0 897.3L1739.5 898.2L1740.0 897.4L1740.5 897.3L1741.0 897.4L1741.5 897.7L1742.0 897.8L1742.5 897.5L1743.0 897.1L1743.5 898.4L1744.0 898.5L1744.5 897.4L1745.0 897.2L1745.5 897.8L1746.0 898.0L1746.5 897.5L1747.0 898.4L1747.5 898.3L1748.0 898.4L1748.5 897.8L1749.0 898.2L1749.5 898.4L1750.0 897.6L1750.5 897.2L1751.0 898.3L1751.5 897.6L1752.0 898.1L1752.5 897.4L1753.0 897.9L1753.5 898.4L1754.0 898.5L1754.5 898.8L1755.0 898.1L1755.5 898.2L1756.0 898.6L1756.5 898.3L1757.0 898.3L1757.5 897.6L1758.0 898.6L1758.5 897.2L1759.0 897.9L1759.5 897.6L1760.0 897.6L1760.5 896.6L1761.0 896.3L1761.5 896.3L1762.0 896.0L1762.5 895.4L1763.0 895.0L1763.5 895.9L1764.0 895.6L1764.5 895.6L1765.0 896.9L1765.5 897.6L1766.0 898.0L1766.5 897.4L1767.0 897.7L1767.5 897.3L1768.0 897.5L1768.5 898.5L1769.0 898.6L1769.5 898.5L1770.0 898.7L1770.5 897.8L1771.0 897.6L1771.5 897.5L1772.0 898.6L1772.5 897.6L1773.0 898.5L1773.5 898.3L1774.0 897.8L1774.5 898.8L1775.0 898.8L1775.5 897.6L1776.0 898.5L1776.5 898.4L1777.0 898.1L1777.5 897.9L1778.0 899.0L1778.5 898.4L1779.0 898.3L1779.5 898.2L1780.0 898.7L1780.5 898.1L1781.0 897.5L1781.5 898.4L1782.0 898.1L1782.5 898.8L1783.0 898.6L1783.5 897.9L1784.0 898.8L1784.5 897.6L1785.0 897.5L1785.5 898.8L1786.0 897.5L1786.5 898.4L1787.0 897.8L1787.5 897.8L1788.0 898.5L1788.5 897.9L1789.0 897.9L1789.5 897.7L1790.0 898.6L1790.5 897.8L1791.0 897.5L1791.5 897.9L1792.0 898.1L1792.5 898.8L1793.0 898.2L1793.5 898.4L1794.0 897.8L1794.5 897.9L1795.0 898.1L1795.5 898.7L1796.0 898.0L1796.5 898.0L1797.0 898.7L1797.5 897.6L1798.0 898.0L1798.5 898.8L1799.0 897.5L1799.5 898.8L1800.0 898.5L1800.5 897.8L1801.0 898.0L1801.5 898.1L1802.0 898.0L1802.5 898.3L1803.0 898.5L1803.5 898.7L1804.0 898.9L1804.5 897.9L1805.0 897.8L1805.5 898.1L1806.0 897.8L1806.5 898.4L1807.0 898.6L1807.5 898.4L1808.0 897.6L1808.5 898.9L1809.0 898.2L1809.5 898.6L1810.0 897.8L1810.5 898.4L1811.0 898.5L1811.5 898.4L1812.0 898.1L1812.5 897.8L1813.0 898.4L1813.5 897.6L1814.0 898.8L1814.5 898.6L1815.0 898.8L1815.5 898.8L1816.0 897.8L1816.5 897.8L1817.0 898.7L1817.5 898.7L1818.0 898.3L1818.5 897.8L1819.0 897.7L1819.5 897.8L1820.0 898.1L1820.5 898.8L1821.0 898.4L1821.5 898.7L1822.0 898.2L1822.5 898.1L1823.0 898.7L1823.5 898.6L1824.0 897.7L1824.5 899.0L1825.0 897.7L1825.5 897.6L1826.0 897.5L1826.5 898.4L1827.0 898.1L1827.5 898.1L1828.0 898.0L1828.5 897.4L1829.0 897.9L1829.5 898.5L1830.0 897.6L1830.5 898.2L1831.0 898.0L1831.5 897.8L1832.0 899.0L1832.5 897.8L1833.0 897.9L1833.5 898.2L1834.0 898.2L1834.5 898.3L1835.0 898.7L1835.5 898.2L1836.0 898.9L1836.5 898.2L1837.0 898.0L1837.5 898.3L1838.0 898.1L1838.5 897.5L1839.0 897.6L1839.5 898.8L1840.0 897.7L1840.5 898.0L1841.0 898.9L1841.5 898.4L1842.0 898.6L1842.5 898.9L1843.0 898.1L1843.5 897.5L1844.0 898.5L1844.5 897.6L1845.0 897.9L1845.5 898.8L1846.0 897.6L1846.5 898.0L1847.0 897.5L1847.5 897.9L1848.0 897.8L1848.5 898.5L1849.0 897.7L1849.5 897.5L1850.0 897.6L1850.5 898.3L1851.0 897.8L1851.5 898.2L1852.0 898.8L1852.5 898.9L1853.0 898.9L1853.5 898.7L1854.0 898.7L1854.5 898.2L1855.0 897.9L1855.5 898.1L1856.0 898.3L1856.5 898.0L1857.0 898.5L1857.5 898.3L1858.0 897.8L1858.5 898.4L1859.0 898.7L1859.5 897.6L1860.0 897.8L1860.5 898.4L1861.0 898.4L1861.5 898.2L1862.0 898.0L1862.5 898.6L1863.0 899.0L1863.5 898.7L1864.0 897.7L1864.5 898.8L1865.0 898.3L1865.5 898.7L1866.0 898.7L1866.5 898.7L1867.0 898.4L1867.5 898.7L1868.0 899.0L1868.5 898.8L1869.0 898.7L1869.5 898.2L1870.0 898.9L1870.5 899.0L1871.0 898.3L1871.5 898.3L1872.0 897.9L1872.5 898.9L1873.0 898.4L1873.5 898.4L1874.0 899.0L1874.5 897.5L1875.0 898.6L1875.5 898.8L1876.0 898.2L1876.5 898.7L1877.0 898.0L1877.5 898.4L1878.0 898.8L1878.5 898.9L1879.0 897.8L1879.5 898.6L1880.0 897.7L1880.5 898.3L1881.0 897.5L1881.5 898.5L1882.0 898.6L1882.5 898.6L1883.0 897.7L1883.5 898.0L1884.0 898.4L1884.5 898.9L1885.0 897.9L1885.5 897.4L1886.0 898.1L1886.5 899.0L1887.0 899.0L1887.5 898.9L1888.0 898.7L1888.5 898.9L1889.0 898.9L1889.5 898.0L1890.0 897.6L1890.5 898.7L1891.0 897.4L1891.5 898.2L1892.0 897.7L1892.5 897.5L1893.0 897.5L1893.5 898.9L1894.0 898.5L1894.5 898.0L1895.0 897.5L1895.5 898.9L1896.0 898.5L1896.5 897.6L1897.0 898.8L1897.5 898.4L1898.0 898.5L1898.5 897.9L1899.0 897.5L1899.5 898.7L1900.0 897.8L1900.5 897.8L1901.0 897.7L1901.5 898.1L1902.0 897.5L1902.5 898.4L1903.0 898.3L1903.5 898.6L1904.0 897.8L1904.5 898.2L1905.0 898.6L1905.5 898.7L1906.0 897.8L1906.5 898.0L1907.0 897.9L1907.5 898.4L1908.0 898.2L1908.5 898.8L1909.0 897.9L1909.5 899.0L1910.0 898.3L1910.5 897.8L1911.0 897.9L1911.5 898.8L1912.0 898.6L1912.5 897.7L1913.0 898.0L1913.5 897.6L1914.0 897.6L1914.5 898.3L1915.0 897.6L1915.5 897.8L1916.0 898.5L1916.5 898.4L1917.0 898.9L1917.5 898.4L1918.0 897.5L1918.5 898.8L1919.0 898.1L1919.5 898.8L1920.0 898.9L1920.5 898.0L1921.0 898.6L1921.5 898.9L1922.0 898.8L1922.5 898.0L1923.0 898.1L1923.5 899.0L1924.0 898.6L1924.5 897.5L1925.0 898.6L1925.5 898.1L1926.0 898.3L1926.5 897.8L1927.0 898.0L1927.5 897.7L1928.0 898.1L1928.5 898.7L1929.0 898.7L1929.5 898.9L1930.0 897.7L1930.5 898.8L1931.0 899.0L1931.5 897.5L1932.0 898.7L1932.5 897.6L1933.0 898.9L1933.5 898.3L1934.0 898.6L1934.5 897.7L1935.0 898.0L1935.5 898.0L1936.0 897.8L1936.5 897.6L1937.0 898.4L1937.5 898.0L1938.0 898.3L1938.5 898.8L1939.0 897.7L1939.5 898.0L1940.0 897.7L1940.5 898.7L1941.0 898.1L1941.5 898.3L1942.0 897.8L1942.5 898.9L1943.0 898.4L1943.5 898.2L1944.0 898.9L1944.5 898.1L1945.0 897.8L1945.5 898.3L1946.0 898.0L1946.5 898.0L1947.0 898.7L1947.5 898.4L1948.0 897.4L1948.5 898.5L1949.0 898.3L1949.5 898.9L1950.0 898.7L1950.5 898.7L1951.0 897.5L1951.5 897.8L1952.0 897.6L1952.5 897.4L1953.0 898.0L1953.5 897.5L1954.0 898.1L1954.5 898.3L1955.0 897.5L1955.5 897.6L1956.0 897.5L1956.5 898.2L1957.0 897.8L1957.5 898.3L1958.0 897.4L1958.5 897.5L1959.0 898.5L1959.5 897.5L1960.0 898.7L1960.5 898.8L1961.0 897.8L1961.5 898.5L1962.0 898.2L1962.5 898.0" fill="none" stroke="#8f8f8f" stroke-width="1"/>
<path d="M1666.0 559V900M1566 644.2H1963M1765.0 559V900M1566 729.5H1963M1864.0 559V900M1566 814.8H1963" stroke="#4e4e4e" stroke-width="1.2" fill="none"/>
<path d="M1566 900.5H1963" stroke="#8a8a8a" stroke-width="1"/>
<path d="M1567 900L1963 559" stroke="#b82828" stroke-width="1.3"/>
<path d="M1567 900L1587.2 569.5L1588.6 559.5H1963" stroke="#f2f2f2" stroke-width="1.3" fill="none" stroke-linejoin="round"/>
<circle cx="1567" cy="899.5" r="4" fill="#ffffff"/>
<circle cx="1587.2" cy="569.2" r="3.6" fill="#111" stroke="#ffffff" stroke-width="1.4"/>
</svg>
<div class="fld" style="left:1562.5px;top:910.5px;width:74.5px;height:20px;background:#333;border-color:#2a2a2a"></div>
<span class="t " style="left:1567.00px;top:914.84px;font-size:12px;color:#f0f0f0;letter-spacing:-1.668px;">RGB</span>
<svg style="left:1625px;top:918.5px" width="7" height="4" viewBox="0 0 7 4"><path d="M0 0H7L3.5 4z" fill="#e8e8e8"/></svg>
<div class="fld" style="left:1641.5px;top:910.5px;width:271px;height:20px;background:#333;border-color:#2a2a2a"></div>
<span class="t " style="left:1646.50px;top:914.84px;font-size:12px;color:#f0f0f0;letter-spacing:-0.612px;">Master</span>
<svg style="left:1901px;top:918.5px" width="7" height="4" viewBox="0 0 7 4"><path d="M0 0H7L3.5 4z" fill="#e8e8e8"/></svg>
<div class="fld" style="left:1920px;top:910.5px;width:40px;height:20px;background:#333;border-color:#2a2a2a"></div>
<span class="t " style="left:1924.50px;top:914.84px;font-size:12px;color:#f0f0f0;letter-spacing:-2.004px;">P</span>
<span class="t " style="left:1562.00px;top:939.84px;font-size:12px;color:#f0f0f0;letter-spacing:-1.169px;">X:</span>
<div class="fld" style="left:1573.5px;top:936px;width:54.5px;height:20px;background:#333;border-color:#2a2a2a"></div>
<span class="t " style="left:1579.00px;top:940.34px;font-size:12px;color:#f0f0f0;letter-spacing:-0.805px;">0,051</span>
<span class="t " style="left:1630.00px;top:939.84px;font-size:12px;color:#f0f0f0;letter-spacing:-1.088px;">Y:</span>
<div class="fld" style="left:1640.5px;top:936px;width:54.5px;height:20px;background:#333;border-color:#2a2a2a"></div>
<span class="t " style="left:1646.00px;top:940.34px;font-size:12px;color:#f0f0f0;letter-spacing:-0.805px;">0,971</span>
<span class="t " style="left:1804.00px;top:939.84px;font-size:12px;color:#f0f0f0;letter-spacing:-0.292px;">Min:</span>
<div class="fld" style="left:1827px;top:936px;width:54.5px;height:20px;background:#333;border-color:#2a2a2a"></div>
<span class="t " style="left:1833.00px;top:940.34px;font-size:12px;color:#f0f0f0;letter-spacing:-0.173px;">0</span>
<span class="t " style="left:1884.00px;top:939.84px;font-size:12px;color:#f0f0f0;letter-spacing:-0.626px;">Max:</span>
<div class="fld" style="left:1909.5px;top:936px;width:54.5px;height:20px;background:#333;border-color:#2a2a2a"></div>
<span class="t " style="left:1915.50px;top:940.34px;font-size:12px;color:#f0f0f0;letter-spacing:-1.673px;">1</span>
<div class="r" style="left:1550px;top:975.5px;width:399px;height:1px;background:#2c2c2c;"></div>
<div class="r" style="left:1550px;top:976.5px;width:399px;height:30px;background:#4a4a4a;"></div>
<span class="t " style="left:1555.00px;top:986.34px;font-size:12px;color:#f0f0f0;letter-spacing:-0.601px;">Deckkraft:</span>
<div class="fld" style="left:1606.5px;top:982.5px;width:59.5px;height:19.5px;background:#333;border-color:#2a2a2a"></div>
<span class="t " style="left:1612.00px;top:986.34px;font-size:12px;color:#f0f0f0;letter-spacing:-0.905px;">100 %</span>
<svg style="left:1655px;top:990.5px" width="7" height="4" viewBox="0 0 7 4"><path d="M0 0H7L3.5 4z" fill="#e8e8e8"/></svg>
<span class="t " style="left:1754.00px;top:986.34px;font-size:12px;color:#f0f0f0;letter-spacing:-0.608px;">Mischmodus:</span>
<div class="fld" style="left:1821.5px;top:982.5px;width:140px;height:19.5px;background:#333;border-color:#2a2a2a"></div>
<span class="t " style="left:1826.00px;top:987.34px;font-size:12px;color:#f0f0f0;letter-spacing:-0.445px;">Normal</span>
<!-- p_bottom -->
<div class="r" style="left:1658px;top:1008px;width:270px;height:7px;background:#3a3a3a;"></div>
<div class="r" style="left:1656px;top:1008px;width:2px;height:7px;background:#333;"></div>
<div class="r" style="left:8px;top:1015px;width:1920px;height:25px;background:#333333;"></div>
<span class="t " style="left:23.50px;top:1022.34px;font-size:12px;color:#ffffff;font-weight:bold;letter-spacing:-0.028px;">Ziehen</span>
<span class="t " style="left:66.00px;top:1022.34px;font-size:12px;color:#bdbdbd;letter-spacing:-0.112px;">= Ansicht schwenken.</span>
<div class="r" style="left:0px;top:1040px;width:1928px;height:8px;background:#1e2020;background:linear-gradient(90deg,#1c1c1c 0%,#1e1f1e 36%,#222826 48%,#20211f 60%,#1e1f1f 100%)"></div>
<div class="r" style="left:0px;top:1040px;width:8px;height:8px;background:#000;"></div>
<div class="r" style="left:696px;top:1040px;width:48px;height:8px;background:#505352;"></div>
<div class="r" style="left:1922px;top:1040px;width:1px;height:8px;background:#6a6a6a;"></div>
<div class="r" style="left:1860px;top:1040px;width:60px;height:8px;overflow:hidden"><span class="t" style="left:7px;top:4.3px;font-size:12px;color:#fff;letter-spacing:0.3px">20:30:59</span></div>
</body></html>
